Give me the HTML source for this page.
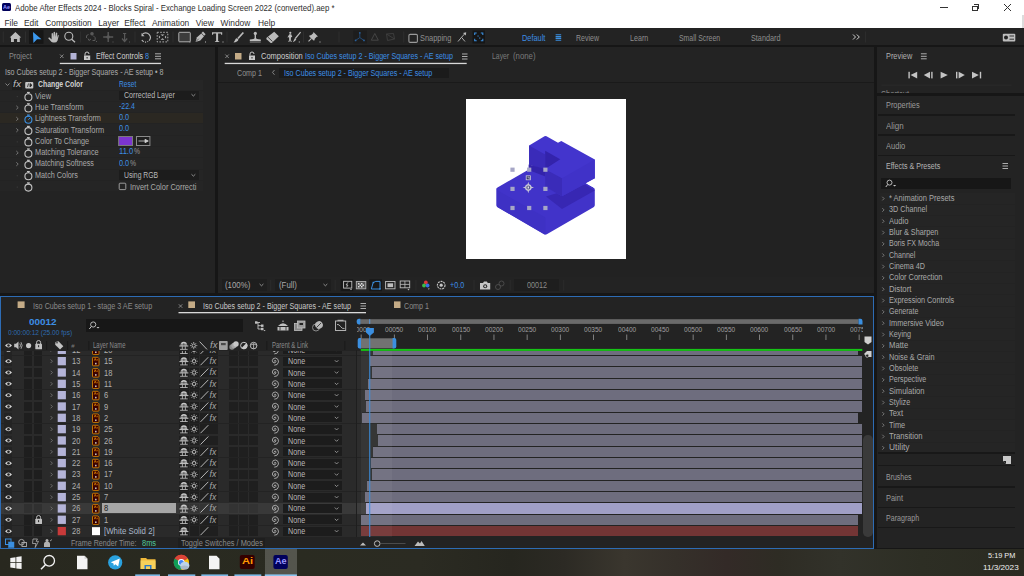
<!DOCTYPE html><html><head><meta charset="utf-8"><style>html,body{margin:0;padding:0;}body{width:1024px;height:576px;position:relative;overflow:hidden;background:#161616;font-family:"Liberation Sans",sans-serif;}div{position:absolute;}.t{position:absolute;white-space:nowrap;line-height:1;transform-origin:0 50%;}</style></head><body><div style="left:0px;top:0px;width:1024px;height:28px;background:#fff;"></div><div style="left:1022.4px;top:15px;width:1.6px;height:13px;background:#dcdcdc;"></div><div style="left:2px;top:3px;width:9px;height:8px;background:#00005b;border-radius:1.5px;"></div><span class="t" style="left:3.20px;top:4.50px;font-size:5px;color:#9999ff;font-weight:bold;transform:scaleX(1.0952);">Ae</span><span class="t" style="left:14.60px;top:3.80px;font-size:8.4px;color:#2e2e2e;transform:scaleX(0.9353);">Adobe After Effects 2024 - Blocks Spiral - Exchange Loading Screen 2022 (converted).aep *</span><span class="t" style="left:4.50px;top:18.50px;font-size:8.4px;color:#2e2e2e;">File</span><span class="t" style="left:24.00px;top:18.50px;font-size:8.4px;color:#2e2e2e;">Edit</span><span class="t" style="left:45.20px;top:18.50px;font-size:8.4px;color:#2e2e2e;">Composition</span><span class="t" style="left:98.20px;top:18.50px;font-size:8.4px;color:#2e2e2e;">Layer</span><span class="t" style="left:124.20px;top:18.50px;font-size:8.4px;color:#2e2e2e;">Effect</span><span class="t" style="left:152.00px;top:18.50px;font-size:8.4px;color:#2e2e2e;">Animation</span><span class="t" style="left:195.80px;top:18.50px;font-size:8.4px;color:#2e2e2e;">View</span><span class="t" style="left:220.50px;top:18.50px;font-size:8.4px;color:#2e2e2e;">Window</span><span class="t" style="left:258.00px;top:18.50px;font-size:8.4px;color:#2e2e2e;">Help</span><div style="left:940px;top:7px;width:8px;height:1px;background:#333;"></div><div style="left:972.3px;top:5.6px;width:5.6px;height:5.6px;background:transparent;border:1px solid #333;box-sizing:border-box;"></div><div style="left:974px;top:4.2px;width:5.3px;height:5.3px;background:transparent;border-top:1px solid #333;border-right:1px solid #333;box-sizing:border-box;"></div><svg style="position:absolute;left:1002.5px;top:3px;" width="9" height="9" viewBox="0 0 9 9"><path d="M1 1 L8 8 M8 1 L1 8" stroke="#333" stroke-width="1"/></svg><div style="left:0px;top:28px;width:1024px;height:16.5px;background:#232323;"></div><svg style="position:absolute;left:0;top:0" width="1024" height="576"><rect x="2.8" y="31.5" width="1" height="11" fill="#2e2e2e"/><rect x="25.0" y="31.5" width="1" height="11" fill="#2e2e2e"/><rect x="79.9" y="31.5" width="1" height="11" fill="#2e2e2e"/><rect x="134.5" y="31.5" width="1" height="11" fill="#2e2e2e"/><rect x="172.5" y="31.5" width="1" height="11" fill="#2e2e2e"/><rect x="226.5" y="31.5" width="1" height="11" fill="#2e2e2e"/><rect x="303.0" y="31.5" width="1" height="11" fill="#2e2e2e"/><rect x="338.5" y="31.5" width="1" height="11" fill="#2e2e2e"/><rect x="403.2" y="31.5" width="1" height="11" fill="#2e2e2e"/><rect x="864.9" y="31.5" width="1" height="11" fill="#2e2e2e"/><path d="M15.4 32 L21.2 37.6 L19.8 37.6 L19.8 42 L17.1 42 L17.1 39 L13.9 39 L13.9 42 L11 42 L11 37.6 L9.7 37.6 Z" fill="#bcbcbc"/><rect x="29" y="30.2" width="14.5" height="13.6" fill="#161616"/><path d="M33 32 L41.5 39.3 L37 39.3 L33.4 43 Z" fill="#3b98ee"/><path d="M49.5 37.5 L51.6 39.6 L51.6 33.5 Q52.3 32.6 53 33.5 L53.2 37 L53.6 32.2 Q54.4 31.3 55.1 32.2 L55.1 37 L55.9 33 Q56.7 32.2 57.3 33 L57 37.8 L57.8 35.3 Q58.6 34.8 58.8 35.6 L57.6 40.4 Q56.6 42.6 54.5 42.6 L53 42.6 Q51.5 42.4 50.2 40.4 L48.2 38.3 Q48.6 37.1 49.5 37.5 Z" fill="#bcbcbc"/><circle cx="68.8" cy="36.2" r="4" fill="none" stroke="#bcbcbc" stroke-width="1.1"/><path d="M71.7 39.2 L75 42.3" stroke="#bcbcbc" stroke-width="1.3"/><path d="M86.5 38 Q85.5 35 88.5 34.5 M93 35.5 Q96.5 37.5 95 40.5 L92.5 40.5 M88 38.5 L89 40.5 L91 39" stroke="#595959" stroke-width="1" fill="none"/><circle cx="92" cy="33.8" r="1.8" fill="#595959"/><rect x="96" y="41" width="1" height="1" fill="#595959"/><path d="M108.2 32 L108.2 42 M103.2 37 L113.2 37" stroke="#595959" stroke-width="1.4"/><circle cx="108.2" cy="37" r="1.8" fill="#595959"/><rect x="112.5" y="41.5" width="1" height="1" fill="#595959"/><path d="M124.6 33 L124.6 41 M122 38.5 L124.6 41.5 L127.2 38.5 M123 33.5 L126.2 33.5" stroke="#595959" stroke-width="1.2" fill="none"/><rect x="129" y="41.5" width="1" height="1" fill="#595959"/><path d="M142.3 34.4 A4.6 4.6 0 1 1 141.8 40" stroke="#bcbcbc" stroke-width="1.1" fill="none" stroke-dasharray="14 1.2 1 1.2 1 1.2"/><path d="M141.5 33 L141.5 36.3 L144.6 36.3 Z" fill="#bcbcbc"/><rect x="157.2" y="32.3" width="10.6" height="9.6" fill="none" stroke="#bcbcbc" stroke-width="0.9" stroke-dasharray="1.6 1.4"/><path d="M160.5 34.5 L162.5 36 L164.5 34.5 Z M160.5 39.8 L162.5 38.3 L164.5 39.8 Z M158.9 35.5 L160.3 37.1 L158.9 38.7 Z M166.1 35.5 L164.7 37.1 L166.1 38.7 Z" fill="#bcbcbc"/><rect x="178.8" y="32.3" width="11.5" height="9.5" fill="#3c3c3c" stroke="#bcbcbc" stroke-width="0.9" rx="0.8"/><rect x="189.5" y="41.5" width="1" height="1" fill="#bcbcbc"/><path d="M195.5 42 L197 37.2 L201.3 33.5 L204 36.2 L200.3 40.5 Z" fill="#bcbcbc"/><path d="M201.5 33 L203 31.6 L205.6 34.2 L204.2 35.7 Z" fill="#bcbcbc"/><path d="M195.8 41.7 L198.8 38.7" stroke="#232323" stroke-width="0.6"/><rect x="205" y="41.5" width="1" height="1" fill="#bcbcbc"/><path d="M212 32.2 L222.2 32.2 L222.2 34.8 L221.2 34.8 L220.8 33.6 L218.1 33.6 L218.1 41 L219.3 41.5 L219.3 42 L214.9 42 L214.9 41.5 L216.1 41 L216.1 33.6 L213.4 33.6 L213 34.8 L212 34.8 Z" fill="#bcbcbc"/><rect x="222.5" y="41.5" width="1" height="1" fill="#bcbcbc"/><path d="M242.7 32 L244 33 L238.6 39 L237.3 38 Z" fill="#bcbcbc"/><path d="M237 38.3 L238.5 39.6 Q237.8 42.3 233.5 42.5 Q235 40.5 235.3 39.5 Q235.8 38.4 237 38.3 Z" fill="#bcbcbc"/><circle cx="255.3" cy="33.4" r="1.6" fill="#bcbcbc"/><path d="M254.6 34.6 L256 34.6 L256 38 Q256 39.2 260.8 39.5 L260.8 41 L249.8 41 L249.8 39.5 Q254.6 39.2 254.6 38 Z" fill="#bcbcbc"/><rect x="249.8" y="41.5" width="11" height="1" fill="#888"/><path d="M274.2 31.8 L278.8 36.2 L272 42.8 Q271.2 43.4 270.4 42.8 L266.6 39.2 Q266 38.5 266.6 37.8 Z" fill="#bcbcbc"/><path d="M267.8 37 L272.5 41.5" stroke="#232323" stroke-width="0.8"/><circle cx="290.3" cy="32.8" r="1.1" fill="#bcbcbc"/><path d="M289.3 34.2 L291.2 34.2 L292.3 37 L291 37.2 L290.8 39.5 L291.8 42 L290.8 42 L290 40 L289.3 42 L288.3 42 L289.2 39.5 L289 37.2 L287.4 37.5 Z" fill="#bcbcbc"/><path d="M300.6 32.2 L295.3 38.5" stroke="#bcbcbc" stroke-width="1.2"/><path d="M295 38 L296.3 39.3 Q295.5 41.5 292.8 42.2 Q293.8 40.2 295 38 Z" fill="#bcbcbc"/><rect x="298.8" y="41.5" width="1" height="1" fill="#bcbcbc"/><path d="M313.5 32 L318 36.4 L316.7 36.7 L314.6 38.9 L314.7 40.3 L313.5 40.6 L309.3 36.4 L309.6 35.2 L311 35.3 L313.2 33.2 Z" fill="#bcbcbc"/><path d="M311.5 38.3 L308.5 41.4" stroke="#bcbcbc" stroke-width="1.1"/><rect x="319.5" y="41.5" width="1" height="1" fill="#bcbcbc"/><rect x="353.4" y="30.5" width="13.6" height="13" fill="#1d1d1d"/><path d="M359.8 32.8 L359.8 37.6 L355.6 40.4 M359.8 37.6 L364 40.4" stroke="#244f7f" stroke-width="0.9" fill="none"/><circle cx="359.8" cy="32.8" r="0.9" fill="#2a5f99"/><circle cx="355.6" cy="40.4" r="0.9" fill="#2a5f99"/><circle cx="364" cy="40.4" r="0.9" fill="#2a5f99"/><path d="M374.8 33.5 L371.3 40.2 L378.3 40.2 Z" stroke="#4a4a4a" stroke-width="0.9" fill="none"/><path d="M386.5 34 L393.5 33.5 L394.5 39 L387.5 40.5 Z M386.5 34 L394.5 39" stroke="#404040" stroke-width="0.9" fill="none"/><rect x="408.9" y="34.4" width="8.5" height="8" rx="1.2" fill="none" stroke="#9a9a9a" stroke-width="1.1"/><path d="M458 41.5 L461.5 37.3 L465 41.5 M461.5 37.3 L465 33.5" stroke="#bcbcbc" stroke-width="0.9" fill="none"/><path d="M463 33 L466.2 32.3 L465.8 35.6 Z" fill="#bcbcbc"/><rect x="472.5" y="30.5" width="12.5" height="13" fill="#161616"/><path d="M474.7 35 L474.7 33 L476.7 33 M480.8 33 L482.8 33 L482.8 35 M482.8 38.8 L482.8 40.8 L480.8 40.8 M476.7 40.8 L474.7 40.8 L474.7 38.8" stroke="#3b8fe0" stroke-width="1.1" fill="none"/><rect x="477.5" y="35.5" width="1.1" height="1.1" fill="#3b8fe0"/><rect x="479.2" y="37.5" width="1.1" height="1.1" fill="#3b8fe0"/><path d="M555.6 34.8 H561.2 M555.6 36.6 H561.2 M555.6 38.4 H561.2 M555.6 40.2 H561.2" stroke="#3b8fe0" stroke-width="1.1"/><path d="M853 34.5 L855.5 37 L853 39.5 M856.8 34.5 L859.3 37 L856.8 39.5" stroke="#cfcfcf" stroke-width="1" fill="none"/><rect x="1002.8" y="33.8" width="12.5" height="7.7" rx="1" fill="#bdbdbd"/><circle cx="1006" cy="37.6" r="2" fill="#232323"/><path d="M1009.5 36 H1014 M1009.5 39.2 H1014" stroke="#232323" stroke-width="0.9"/></svg><span class="t" style="left:420.00px;top:33.70px;font-size:8.4px;color:#8f8f8f;transform:scaleX(0.8846);">Snapping</span><span class="t" style="left:521.90px;top:33.70px;font-size:8.4px;color:#3d8ee5;transform:scaleX(0.8793);">Default</span><span class="t" style="left:576.00px;top:33.70px;font-size:8.4px;color:#8f8f8f;transform:scaleX(0.8351);">Review</span><span class="t" style="left:629.70px;top:33.70px;font-size:8.4px;color:#8f8f8f;transform:scaleX(0.8519);">Learn</span><span class="t" style="left:678.80px;top:33.70px;font-size:8.4px;color:#8f8f8f;transform:scaleX(0.8248);">Small Screen</span><span class="t" style="left:751.00px;top:33.70px;font-size:8.4px;color:#8f8f8f;transform:scaleX(0.8654);">Standard</span><div style="left:0px;top:46.5px;width:214.5px;height:246px;background:#232323;"></div><div style="left:217.5px;top:46.5px;width:656.3px;height:246px;background:#232323;"></div><div style="left:877px;top:46.5px;width:147px;height:46px;background:#232323;"></div><div style="left:877px;top:96px;width:147px;height:452px;background:#232323;"></div><div style="left:0px;top:296px;width:873.5px;height:253px;background:#232323;box-shadow:inset 0 0 0 1px #2d6cb5;"></div><div style="left:0px;top:549px;width:1024px;height:27px;background:linear-gradient(90deg,#28281f 0%,#2a2b21 29%,#2b2b22 41%,#26261f 50%,#2c2a24 55%,#3a362e 61%,#35302a 66%,#332a27 71%,#2e2c24 76%,#32322a 82%,#2d2e24 90%,#2a2a21 100%);"></div><span class="t" style="left:9.00px;top:51.80px;font-size:8.4px;color:#8a8a8a;transform:scaleX(0.8721);">Project</span><span class="t" style="left:95.70px;top:51.80px;font-size:8.4px;color:#cfcfcf;transform:scaleX(0.8610);">Effect Controls</span><span class="t" style="left:145.00px;top:51.80px;font-size:8.4px;color:#3d8ee5;transform:scaleX(0.8563);">8</span><span class="t" style="left:4.50px;top:68.30px;font-size:8.4px;color:#a9a9a9;transform:scaleX(0.8528);">Iso Cubes setup 2 - Bigger Squares - AE setup • 8</span><div style="left:0px;top:79.8px;width:203px;height:10.3px;background:#262626;"></div><div style="left:0px;top:90.5px;width:203px;height:10.3px;background:#252525;"></div><div style="left:0px;top:101.8px;width:203px;height:10.3px;background:#252525;"></div><div style="left:0px;top:113.1px;width:203px;height:10.3px;background:#2b2822;"></div><div style="left:0px;top:124.4px;width:203px;height:10.3px;background:#252525;"></div><div style="left:0px;top:135.7px;width:203px;height:10.3px;background:#252525;"></div><div style="left:0px;top:147.0px;width:203px;height:10.3px;background:#252525;"></div><div style="left:0px;top:158.3px;width:203px;height:10.3px;background:#252525;"></div><div style="left:0px;top:169.60000000000002px;width:203px;height:10.3px;background:#252525;"></div><div style="left:0px;top:180.9px;width:203px;height:10.3px;background:#252525;"></div><div style="left:12.4px;top:80.2px;width:9.6px;height:9.6px;background:#1d1d1d;"></div><span class="t" style="left:13.40px;top:79.95px;font-size:9.2px;color:#bdbdbd;transform:scaleX(1.1319);font-style:italic;font-family:"Liberation Serif",serif;">fx</span><span class="t" style="left:37.60px;top:80.40px;font-size:8.4px;color:#d2d2d2;font-weight:bold;transform:scaleX(0.8190);">Change Color</span><span class="t" style="left:118.70px;top:80.10px;font-size:8.4px;color:#3d8ee5;transform:scaleX(0.7884);">Reset</span><span class="t" style="left:34.90px;top:91.60px;font-size:8.4px;color:#a9a9a9;transform:scaleX(0.8917);">View</span><span class="t" style="left:34.90px;top:102.90px;font-size:8.4px;color:#a9a9a9;transform:scaleX(0.8803);">Hue Transform</span><span class="t" style="left:34.90px;top:114.20px;font-size:8.4px;color:#a9a9a9;transform:scaleX(0.8687);">Lightness Transform</span><span class="t" style="left:34.90px;top:125.50px;font-size:8.4px;color:#a9a9a9;transform:scaleX(0.8836);">Saturation Transform</span><span class="t" style="left:34.90px;top:136.80px;font-size:8.4px;color:#a9a9a9;transform:scaleX(0.8635);">Color To Change</span><span class="t" style="left:34.90px;top:148.10px;font-size:8.4px;color:#a9a9a9;transform:scaleX(0.8792);">Matching Tolerance</span><span class="t" style="left:34.90px;top:159.40px;font-size:8.4px;color:#a9a9a9;transform:scaleX(0.8553);">Matching Softness</span><span class="t" style="left:34.90px;top:170.70px;font-size:8.4px;color:#a9a9a9;transform:scaleX(0.8691);">Match Colors</span><div style="left:118.7px;top:90.7px;width:80.3px;height:9.3px;background:#1c1c1c;"></div><span class="t" style="left:123.80px;top:90.90px;font-size:8.4px;color:#b9b9b9;transform:scaleX(0.8452);">Corrected Layer</span><span class="t" style="left:119.20px;top:101.90px;font-size:8.4px;color:#3d8ee5;transform:scaleX(0.8305);">-22.4</span><span class="t" style="left:118.70px;top:113.20px;font-size:8.4px;color:#3d8ee5;transform:scaleX(0.8736);">0.0</span><span class="t" style="left:118.70px;top:124.20px;font-size:8.4px;color:#3d8ee5;transform:scaleX(0.8736);">0.0</span><span class="t" style="left:119.20px;top:147.40px;font-size:8.4px;color:#3d8ee5;transform:scaleX(0.9031);">11.0</span><span class="t" style="left:133.60px;top:147.40px;font-size:8.4px;color:#9a9a9a;transform:scaleX(0.8033);">%</span><span class="t" style="left:118.70px;top:159.00px;font-size:8.4px;color:#3d8ee5;transform:scaleX(0.8736);">0.0</span><span class="t" style="left:129.90px;top:159.00px;font-size:8.4px;color:#9a9a9a;transform:scaleX(0.8167);">%</span><div style="left:118.7px;top:170.3px;width:80.3px;height:10px;background:#1c1c1c;"></div><span class="t" style="left:123.80px;top:170.80px;font-size:8.4px;color:#b9b9b9;transform:scaleX(0.8141);">Using RGB</span><span class="t" style="left:129.70px;top:182.70px;font-size:8.4px;color:#a9a9a9;transform:scaleX(0.8862);">Invert Color Correcti</span><svg style="position:absolute;left:0;top:0" width="1024" height="576"><path d="M60 54.5 L63.5 58 M63.5 54.5 L60 58" stroke="#9a9a9a" stroke-width="0.8"/><rect x="70.5" y="53" width="6" height="6.5" fill="#b3b3d6"/><path d="M85 55.5 L85 54 Q85 52 87 52 Q89 52 89 54" stroke="#c8c8c8" stroke-width="1" fill="none"/><rect x="84" y="55.5" width="6.2" height="4.5" fill="#c8c8c8"/><rect x="86.6" y="57" width="1" height="1.5" fill="#232323"/><path d="M155 53.8 H161 M155 56.3 H161 M155 58.8 H161" stroke="#bdbdbd" stroke-width="0.9"/><rect x="59.8" y="62.8" width="101.2" height="1.3" fill="#d9d9d9"/><path d="M5.5 83.5 L7.5 85.5 L9.5 83.5" stroke="#9a9a9a" stroke-width="0.8" fill="none"/><rect x="25.2" y="82" width="8.1" height="6.4" rx="1" fill="#c6c6c6"/><path d="M27.5 87 L28.5 83.5 M30 83.5 L32 85.2 L30 87 Z" stroke="#262626" stroke-width="0.8" fill="#262626"/><circle cx="28.4" cy="97.2" r="3.5" fill="none" stroke="#c2c2c2" stroke-width="1.1"/><rect x="27" y="91.89999999999999" width="2.8" height="1.2" fill="#c2c2c2"/><rect x="27.9" y="92.89999999999999" width="1" height="1" fill="#c2c2c2"/><rect x="16.8" y="96.3" width="0.8" height="0.8" fill="#555"/><circle cx="28.4" cy="108.5" r="3.5" fill="none" stroke="#c2c2c2" stroke-width="1.1"/><rect x="27" y="103.19999999999999" width="2.8" height="1.2" fill="#c2c2c2"/><rect x="27.9" y="104.19999999999999" width="1" height="1" fill="#c2c2c2"/><path d="M16.3 105.8 L18.2 107.6 L16.3 109.39999999999999" stroke="#8a8a8a" stroke-width="0.8" fill="none"/><circle cx="28.4" cy="119.80000000000001" r="3.5" fill="none" stroke="#3b8fe0" stroke-width="1.1"/><rect x="27" y="114.5" width="2.8" height="1.2" fill="#3b8fe0"/><rect x="27.9" y="115.5" width="1" height="1" fill="#3b8fe0"/><path d="M28.4 119.7 L30.2 117.9" stroke="#3b8fe0" stroke-width="1"/><path d="M16.3 117.10000000000001 L18.2 118.9 L16.3 120.7" stroke="#8a8a8a" stroke-width="0.8" fill="none"/><circle cx="28.4" cy="131.1" r="3.5" fill="none" stroke="#c2c2c2" stroke-width="1.1"/><rect x="27" y="125.79999999999998" width="2.8" height="1.2" fill="#c2c2c2"/><rect x="27.9" y="126.79999999999998" width="1" height="1" fill="#c2c2c2"/><path d="M16.3 128.39999999999998 L18.2 130.2 L16.3 132.0" stroke="#8a8a8a" stroke-width="0.8" fill="none"/><circle cx="28.4" cy="142.4" r="3.5" fill="none" stroke="#c2c2c2" stroke-width="1.1"/><rect x="27" y="137.1" width="2.8" height="1.2" fill="#c2c2c2"/><rect x="27.9" y="138.1" width="1" height="1" fill="#c2c2c2"/><rect x="16.8" y="141.5" width="0.8" height="0.8" fill="#555"/><circle cx="28.4" cy="153.70000000000002" r="3.5" fill="none" stroke="#c2c2c2" stroke-width="1.1"/><rect x="27" y="148.4" width="2.8" height="1.2" fill="#c2c2c2"/><rect x="27.9" y="149.4" width="1" height="1" fill="#c2c2c2"/><path d="M16.3 151.0 L18.2 152.8 L16.3 154.60000000000002" stroke="#8a8a8a" stroke-width="0.8" fill="none"/><circle cx="28.4" cy="165.00000000000003" r="3.5" fill="none" stroke="#c2c2c2" stroke-width="1.1"/><rect x="27" y="159.70000000000002" width="2.8" height="1.2" fill="#c2c2c2"/><rect x="27.9" y="160.70000000000002" width="1" height="1" fill="#c2c2c2"/><path d="M16.3 162.3 L18.2 164.10000000000002 L16.3 165.90000000000003" stroke="#8a8a8a" stroke-width="0.8" fill="none"/><circle cx="28.4" cy="176.3" r="3.5" fill="none" stroke="#c2c2c2" stroke-width="1.1"/><rect x="27" y="171.0" width="2.8" height="1.2" fill="#c2c2c2"/><rect x="27.9" y="172.0" width="1" height="1" fill="#c2c2c2"/><rect x="16.8" y="175.4" width="0.8" height="0.8" fill="#555"/><circle cx="28.4" cy="187.6" r="3.5" fill="none" stroke="#c2c2c2" stroke-width="1.1"/><rect x="27" y="182.29999999999998" width="2.8" height="1.2" fill="#c2c2c2"/><rect x="27.9" y="183.29999999999998" width="1" height="1" fill="#c2c2c2"/><rect x="16.8" y="186.7" width="0.8" height="0.8" fill="#555"/><path d="M191.5 94.2 L193.4 96 L195.3 94.2" stroke="#aaa" stroke-width="0.8" fill="none"/><rect x="118.6" y="136.5" width="13.9" height="9" fill="#7b35d0" stroke="#7a7a7a" stroke-width="1"/><rect x="136.5" y="136.5" width="13.4" height="9" fill="#1f1f1f" stroke="#8a8a8a" stroke-width="1"/><path d="M138.5 141 H146 M145 139.3 L148.3 141 L145 142.7 Z" stroke="#cfcfcf" stroke-width="0.8" fill="#cfcfcf"/><path d="M191.5 174.3 L193.4 176.1 L195.3 174.3" stroke="#aaa" stroke-width="0.8" fill="none"/><rect x="119.2" y="183.2" width="6.6" height="6.4" rx="0.8" fill="none" stroke="#9a9a9a" stroke-width="1"/></svg><span class="t" style="left:260.80px;top:51.80px;font-size:8.4px;color:#cfcfcf;transform:scaleX(0.8975);">Composition</span><span class="t" style="left:304.70px;top:51.80px;font-size:8.4px;color:#3d8ee5;transform:scaleX(0.8515);">Iso Cubes setup 2 - Bigger Squares - AE setup</span><span class="t" style="left:491.80px;top:51.80px;font-size:8.4px;color:#7a7a7a;transform:scaleX(0.8186);">Layer</span><span class="t" style="left:513.40px;top:51.80px;font-size:8.4px;color:#7a7a7a;transform:scaleX(0.9309);">(none)</span><div style="left:217.5px;top:81.5px;width:656.3px;height:1px;background:#1a1a1a;"></div><span class="t" style="left:237.00px;top:68.50px;font-size:8.4px;color:#8f8f8f;transform:scaleX(0.8500);">Comp 1</span><div style="left:278.9px;top:67.5px;width:170.1px;height:10px;background:#1b1b1b;"></div><span class="t" style="left:284.40px;top:68.50px;font-size:8.4px;color:#3d8ee5;transform:scaleX(0.8533);">Iso Cubes setup 2 - Bigger Squares - AE setup</span><div style="left:217.5px;top:82.5px;width:656.3px;height:195px;background:#222222;"></div><div style="left:466px;top:99px;width:160px;height:160px;background:#ffffff;"></div><div style="left:217.5px;top:277.4px;width:656.3px;height:15.1px;background:#232323;"></div><div style="left:221.9px;top:279.4px;width:44.9px;height:11.7px;background:#1e1e1e;"></div><span class="t" style="left:224.80px;top:280.50px;font-size:8.4px;color:#a9a9a9;transform:scaleX(0.9381);">(100%)</span><div style="left:274.6px;top:279.4px;width:56.7px;height:11.7px;background:#1e1e1e;"></div><span class="t" style="left:279.10px;top:280.50px;font-size:8.4px;color:#a9a9a9;transform:scaleX(0.9358);">(Full)</span><span class="t" style="left:449.50px;top:280.50px;font-size:8.4px;color:#3d8ee5;transform:scaleX(0.8563);">+0.0</span><div style="left:514px;top:279.4px;width:45.4px;height:11.7px;background:#1e1e1e;"></div><span class="t" style="left:526.60px;top:280.50px;font-size:8.4px;color:#8a8a8a;transform:scaleX(0.8606);">00012</span><svg style="position:absolute;left:0;top:0" width="1024" height="576"><path d="M225.3 54.5 L228.8 58 M228.8 54.5 L225.3 58" stroke="#9a9a9a" stroke-width="0.8"/><rect x="235" y="53" width="6.5" height="6.5" fill="#c4ab86"/><path d="M250 55.5 L250 54 Q250 52 252 52 Q254 52 254 54" stroke="#c8c8c8" stroke-width="1" fill="none"/><rect x="249" y="55.5" width="6" height="4.5" fill="#c8c8c8"/><rect x="251.5" y="57" width="1" height="1.5" fill="#232323"/><path d="M462 54 H467.5 M462 56.5 H467.5 M462 59 H467.5" stroke="#bdbdbd" stroke-width="0.9"/><rect x="224.7" y="62.8" width="242" height="1.3" fill="#d9d9d9"/><path d="M274.5 70 L272.5 72.4 L274.5 74.8" stroke="#9a9a9a" stroke-width="0.8" fill="none"/><path d="M496.3 189.5 Q496 188.3 497.5 187.5 L544 160.8 Q545.4 160 546.8 160.8 L593.5 187.5 Q594.8 188.3 594.8 189.5 L594.8 205.2 Q594.8 206.4 593.5 207.2 L546.8 234.2 Q545.4 235 544 234.2 L497.5 207.2 Q496.3 206.4 496.3 205.2 Z" fill="#4133c9"/><path d="M497 190 L545.4 217.5 L545.4 234.8 L497.5 207 Z" fill="#3e31c4"/><path d="M546 196.5 L585 184.5 L594.8 190.5 L562 209 Z" fill="#3727b3"/><path d="M529.1 145.4 L544.5 136.3 Q545.5 135.8 546.5 136.3 L558 142.7 L561.3 140.9 L594.8 159.4 L594.8 178.6 L562 196.3 L545.2 186.8 L545.2 169.2 L529.1 164.8 Z" fill="#4335cd"/><path d="M529.1 145.4 L545.2 154.5 L545.2 169.2 L529.1 164.8 Z" fill="#3a2bb9"/><path d="M528.6 164.6 L545.4 169 L545.4 176.5 L528.6 170 Z" fill="#3323ab"/><path d="M545.2 150.8 L560.2 159.3 L545.2 169 Z" fill="#3323ab"/><path d="M545.2 169.2 L562 178.3 L562 196.3 L545.2 186.8 Z" fill="#3a2bb9"/><path d="M562 178.3 L594.8 159.4 L594.8 178.6 L562 196.3 Z" fill="#4032c8"/><path d="M586 183.3 L594.8 178.6 L594.8 188.3 Z" fill="#fff"/><rect x="510.4" y="167.6" width="4.2" height="4.2" fill="#a6a6c6"/><rect x="510.4" y="186.8" width="4.2" height="4.2" fill="#a6a6c6"/><rect x="510.4" y="205.9" width="4.2" height="4.2" fill="#a6a6c6"/><rect x="527.1" y="167.6" width="4.2" height="4.2" fill="#a6a6c6"/><rect x="527.1" y="205.9" width="4.2" height="4.2" fill="#a6a6c6"/><rect x="543.3" y="167.6" width="4.2" height="4.2" fill="#a6a6c6"/><rect x="543.3" y="186.8" width="4.2" height="4.2" fill="#a6a6c6"/><rect x="543.3" y="205.9" width="4.2" height="4.2" fill="#a6a6c6"/><path d="M528.3 181.8 L529.3 185 L527.3 185 Z M528.3 193.2 L529.3 190 L527.3 190 Z M522.6 187.5 L525.8 186.5 L525.8 188.5 Z M534 187.5 L530.8 186.5 L530.8 188.5 Z" fill="#c4c4d4"/><circle cx="528.3" cy="187.5" r="2.6" fill="#5a5a8a" stroke="#c8c8d8" stroke-width="1.2"/><rect x="527.6" y="186.5" width="1.4" height="2" fill="#e0e0e8"/><rect x="526.2" y="175.8" width="4.2" height="4" fill="#3a3a6a" stroke="#c8c8d8" stroke-width="0.8"/><path d="M527.5 177.2 H529.2 V179" stroke="#e0e0e8" stroke-width="0.6" fill="none"/><path d="M259.6 284 L261.5 285.8 L263.4 284" stroke="#aaa" stroke-width="0.8" fill="none"/><path d="M323.5 284 L325.4 285.8 L327.3 284" stroke="#aaa" stroke-width="0.8" fill="none"/><rect x="270.2" y="280" width="1" height="10.5" fill="#2c2c2c"/><rect x="334.7" y="280" width="1" height="10.5" fill="#2c2c2c"/><rect x="415.4" y="280" width="1" height="10.5" fill="#2c2c2c"/><rect x="473.5" y="280" width="1" height="10.5" fill="#2c2c2c"/><rect x="509.7" y="280" width="1" height="10.5" fill="#2c2c2c"/><rect x="563.2" y="280" width="1" height="10.5" fill="#2c2c2c"/><rect x="340.6" y="279.4" width="12.5" height="11.7" fill="#171717"/><rect x="343.6" y="281.3" width="8.2" height="6.8" fill="none" stroke="#c4c4c4" stroke-width="0.9"/><path d="M348 282.3 L346 285 L348 285 L346.5 287.3" stroke="#c4c4c4" stroke-width="0.8" fill="none"/><path d="M350 289 L352 289 L351 290.2 Z" fill="#c4c4c4"/><rect x="356.3" y="281.5" width="9.5" height="7.3" fill="#555" stroke="#b0b0b0" stroke-width="0.9"/><rect x="358" y="283" width="1.5" height="1.5" fill="#ddd"/><rect x="361" y="283" width="1.5" height="1.5" fill="#ddd"/><rect x="359.5" y="284.5" width="1.5" height="1.5" fill="#ddd"/><rect x="362.5" y="284.5" width="1.5" height="1.5" fill="#ddd"/><rect x="358" y="286" width="1.5" height="1.5" fill="#ddd"/><rect x="361" y="286" width="1.5" height="1.5" fill="#ddd"/><rect x="369.3" y="279.4" width="12.7" height="11.7" fill="#171717"/><path d="M371.3 289 L373.2 282.6 L375.8 281.4 L380 281.4 L380 289 Z" fill="none" stroke="#3b8fe0" stroke-width="1" stroke-linejoin="miter"/><rect x="372.6" y="281.8" width="1.4" height="1.4" fill="#3b8fe0"/><rect x="379.3" y="288.3" width="1.4" height="1.4" fill="#3b8fe0"/><rect x="385.6" y="281.5" width="9.4" height="7.3" fill="none" stroke="#bdbdbd" stroke-width="0.9"/><rect x="387.5" y="283.3" width="5.6" height="3.8" fill="#bdbdbd"/><rect x="400.2" y="281" width="9.5" height="6.8" fill="none" stroke="#bdbdbd" stroke-width="0.9"/><path d="M404.9 281 V287.8 M400.2 284.4 H409.7" stroke="#bdbdbd" stroke-width="0.8"/><path d="M407.5 289 L409.5 289 L408.5 290.5 Z" fill="#bdbdbd"/><circle cx="425.8" cy="282.5" r="1.9" fill="#e0383a"/><circle cx="424" cy="285.5" r="1.9" fill="#3cbc48"/><circle cx="427.6" cy="285.5" r="1.9" fill="#3a6fe8"/><path d="M427.8 288.5 L429.8 288.5 L428.8 289.8 Z" fill="#bbb"/><circle cx="441.2" cy="285.2" r="3.8" fill="none" stroke="#c4c4c4" stroke-width="1.1" stroke-dasharray="2 0.8"/><circle cx="441.2" cy="285.2" r="1.6" fill="#c4c4c4"/><path d="M480 283 L483 283 L484 281.5 L486.8 281.5 L487.8 283 L490.2 283 L490.2 289.5 L480 289.5 Z" fill="#c6c6c6"/><circle cx="485.2" cy="286.3" r="2" fill="#232323"/><circle cx="485.2" cy="286.3" r="1.1" fill="#c6c6c6"/><circle cx="498" cy="287" r="2.5" fill="none" stroke="#4a4a4a" stroke-width="1"/><circle cx="501.5" cy="283.5" r="2.5" fill="none" stroke="#4a4a4a" stroke-width="1"/></svg><span class="t" style="left:32.50px;top:302.10px;font-size:8.4px;color:#8a8a8a;transform:scaleX(0.8617);">Iso Cubes setup 1 - stage 3 AE setup</span><span class="t" style="left:203.30px;top:302.10px;font-size:8.4px;color:#c8c8c8;transform:scaleX(0.8527);">Iso Cubes setup 2 - Bigger Squares - AE setup</span><span class="t" style="left:404.00px;top:302.10px;font-size:8.4px;color:#8a8a8a;transform:scaleX(0.8500);">Comp 1</span><span class="t" style="left:28.60px;top:316.54px;font-size:9.4px;color:#3d8ee5;font-weight:bold;transform:scaleX(1.0560);">00012</span><span class="t" style="left:7.90px;top:328.88px;font-size:7px;color:#2e6bb0;transform:scaleX(0.9360);">0:00:00:12 (25.00 fps)</span><div style="left:86px;top:319.4px;width:157.4px;height:12.2px;background:#171717;"></div><span class="t" style="left:71.20px;top:343.24px;font-size:6px;color:#7a7a7a;">#</span><span class="t" style="left:93.10px;top:341.10px;font-size:8.4px;color:#8a8a8a;transform:scaleX(0.7126);">Layer Name</span><span class="t" style="left:209.80px;top:340.90px;font-size:8.4px;color:#a8a8a8;transform:scaleX(1.1326);font-style:italic;font-family:"Liberation Serif",serif;">fx</span><span class="t" style="left:271.70px;top:341.10px;font-size:8.4px;color:#8a8a8a;transform:scaleX(0.7159);">Parent &amp; Link</span><svg style="position:absolute;left:0;top:0" width="1024" height="576"><rect x="17.6" y="301.4" width="7" height="6.6" fill="#c4ab86"/><path d="M178.8 304.3 L182.3 307.8 M182.3 304.3 L178.8 307.8" stroke="#9a9a9a" stroke-width="0.8"/><rect x="188.3" y="301.4" width="6.7" height="6.6" fill="#c4ab86"/><path d="M360.5 303.5 H366 M360.5 306 H366 M360.5 308.5 H366" stroke="#bdbdbd" stroke-width="0.9"/><rect x="178.5" y="312" width="187.5" height="1.3" fill="#d9d9d9"/><rect x="394" y="301.4" width="6.5" height="6.6" fill="#c4ab86"/><circle cx="93.2" cy="324.5" r="2.6" fill="none" stroke="#c8c8c8" stroke-width="0.9"/><path d="M91.3 326.5 L89.3 329" stroke="#c8c8c8" stroke-width="1"/><path d="M96.5 327 L99.5 327 L98 328.6 Z" fill="#c8c8c8"/><path d="M255.5 322.5 H260 M258 322.5 V329 H262 M258 325.7 H262" stroke="#c0c0c0" stroke-width="0.9" fill="none"/><rect x="255" y="321.3" width="2.5" height="2.4" fill="#c0c0c0"/><rect x="261" y="324.5" width="2.5" height="2.4" fill="#c0c0c0"/><rect x="261" y="327.8" width="2.5" height="2.4" fill="#c0c0c0"/><path d="M263.5 330 L265.6 330 L264.5 331.3 Z" fill="#c0c0c0"/><path d="M278 326 Q283 320.5 288 326 Z" fill="#c0c0c0"/><rect x="282.5" y="320.5" width="1" height="1.5" fill="#c0c0c0"/><rect x="277.5" y="327" width="11" height="3.5" fill="#c0c0c0"/><path d="M280 326 V330.5 M286 326 V330.5" stroke="#232323" stroke-width="0.8"/><rect x="294.5" y="323.5" width="7.5" height="7" fill="#888" stroke="#c0c0c0" stroke-width="0.8"/><rect x="297.5" y="321" width="7.5" height="7" fill="#9a9a9a" stroke="#c0c0c0" stroke-width="0.8"/><rect x="299.5" y="323" width="3.5" height="2" fill="#232323"/><ellipse cx="316" cy="327.5" rx="3.5" ry="3.5" fill="none" stroke="#8a8a8a" stroke-width="1"/><ellipse cx="319" cy="325" rx="3.8" ry="3.8" fill="#b8b8b8" transform="rotate(-30 319 325)"/><path d="M316.5 327.5 L321 323" stroke="#232323" stroke-width="0.8"/><rect x="335.5" y="321" width="10.2" height="9.5" fill="none" stroke="#c0c0c0" stroke-width="0.9"/><path d="M337 324.5 Q339 324 340.5 326.5 Q342 329 344.5 328.5" stroke="#c0c0c0" stroke-width="0.9" fill="none"/><rect x="337.5" y="319.8" width="6" height="1" fill="#c0c0c0"/><path d="M5 345.5 Q8.5 341.5 12 345.5 Q8.5 349.5 5 345.5 Z" fill="#d0d0d0"/><circle cx="8.5" cy="345.5" r="1.3" fill="#232323"/><path d="M14.2 343.8 H16 L18.5 341.5 V349.5 L16 347.2 H14.2 Z" fill="#c0c0c0"/><path d="M19.8 343.5 Q21.2 345.5 19.8 347.5 M21 342.2 Q23.2 345.5 21 348.8" stroke="#c0c0c0" stroke-width="0.8" fill="none"/><circle cx="28.6" cy="345.6" r="2.6" fill="#c8c8c8"/><path d="M36.6 344 V342.5 Q36.6 340.5 38.6 340.5 Q40.6 340.5 40.6 342.5 V344" stroke="#c0c0c0" stroke-width="1" fill="none"/><rect x="35.3" y="343.8" width="6.7" height="5.5" rx="0.6" fill="#c0c0c0"/><rect x="38.1" y="345.2" width="1" height="2" fill="#232323"/><path d="M55.5 342 L58.5 341.3 L63.3 346.3 L60 349.5 L55.2 344.7 Z" fill="#c4c4c4"/><circle cx="57" cy="342.8" r="0.8" fill="#232323"/><rect x="46.1" y="341" width="1" height="9" fill="#1a1a1a"/><rect x="67.2" y="341" width="1" height="9" fill="#1a1a1a"/><rect x="88.3" y="341" width="1" height="9" fill="#1a1a1a"/><rect x="266.3" y="341" width="1" height="9" fill="#1a1a1a"/><rect x="344.4" y="341" width="1" height="9" fill="#1a1a1a"/><path d="M180.4 345.6 Q180.4 341.7 183.8 341.7 Q187.20000000000002 341.7 187.20000000000002 345.6 Z" fill="#c8c8c8"/><rect x="179.3" y="345.5" width="9" height="1" fill="#c8c8c8"/><path d="M182.3 346.3 V349.2 M185.3 346.3 V349.2" stroke="#c8c8c8" stroke-width="0.8"/><rect x="180.0" y="348.90000000000003" width="7.6" height="0.8" fill="#c8c8c8"/><path d="M183.8 343.1 V345.3" stroke="#232323" stroke-width="0.6"/><path d="M180.4 344.3 H187.20000000000002" stroke="#232323" stroke-width="0.5"/><circle cx="193.7" cy="345.6" r="1.7" fill="none" stroke="#c8c8c8" stroke-width="0.9"/><path d="M196.20 345.60 L197.30 345.60" stroke="#c8c8c8" stroke-width="0.8"/><path d="M195.47 347.37 L196.25 348.15" stroke="#c8c8c8" stroke-width="0.8"/><path d="M193.70 348.10 L193.70 349.20" stroke="#c8c8c8" stroke-width="0.8"/><path d="M191.93 347.37 L191.15 348.15" stroke="#c8c8c8" stroke-width="0.8"/><path d="M191.20 345.60 L190.10 345.60" stroke="#c8c8c8" stroke-width="0.8"/><path d="M191.93 343.83 L191.15 343.05" stroke="#c8c8c8" stroke-width="0.8"/><path d="M193.70 343.10 L193.70 342.00" stroke="#c8c8c8" stroke-width="0.8"/><path d="M195.47 343.83 L196.25 343.05" stroke="#c8c8c8" stroke-width="0.8"/><path d="M199.6 341.6 L207 349.4" stroke="#c8c8c8" stroke-width="0.9"/><rect x="219" y="341" width="8.7" height="9" rx="0.8" fill="#a0a0a0"/><rect x="221" y="343" width="4.7" height="2.2" fill="#4a4a4a"/><circle cx="232" cy="347" r="2.7" fill="#8a8a8a"/><circle cx="234" cy="345.5" r="2.7" fill="#a8a8a8"/><circle cx="236" cy="344" r="2.7" fill="#c8c8c8"/><circle cx="243.9" cy="345.6" r="3.3" fill="none" stroke="#c8c8c8" stroke-width="1"/><path d="M243.9 345.6 m-3.3 0 a3.3 3.3 0 0 0 6.6 0 Z" fill="#c8c8c8" transform="rotate(-45 243.9 345.6)"/><circle cx="253.6" cy="345.6" r="3.3" fill="none" stroke="#c8c8c8" stroke-width="0.9"/><path d="M250.5 345.2 Q253.6 342.5 256.7 345.2 M253.6 343.5 V348.8" stroke="#c8c8c8" stroke-width="0.8" fill="none"/></svg><div style="left:356px;top:350.4px;width:1px;height:187px;background:#1e1e1e;"></div><div style="left:0;top:351.2px;width:873px;height:185.8px;overflow:hidden;"><div style="left:0.80px;top:-6.72px;width:355.20px;height:10.80px;background:#2a2a2a;"></div><div style="left:356.00px;top:-7.02px;width:1.00px;height:11.40px;background:#1e1e1e;"></div><div style="left:4.10px;top:-6.22px;width:8.20px;height:9.80px;background:#232323;"></div><div style="left:24.00px;top:-6.22px;width:8.20px;height:9.80px;background:#1e1e1e;"></div><div style="left:34.00px;top:-6.22px;width:8.20px;height:9.80px;background:#1e1e1e;"></div><div style="left:178.80px;top:-6.22px;width:9.80px;height:9.80px;background:#1f1f1f;"></div><div style="left:189.80px;top:-6.22px;width:9.00px;height:9.80px;background:#1f1f1f;"></div><div style="left:199.60px;top:-6.22px;width:9.20px;height:9.80px;background:#1f1f1f;"></div><div style="left:209.30px;top:-6.22px;width:8.60px;height:9.80px;background:#1f1f1f;"></div><div style="left:229.00px;top:-6.22px;width:8.80px;height:9.80px;background:#1f1f1f;"></div><div style="left:239.00px;top:-6.22px;width:8.80px;height:9.80px;background:#1f1f1f;"></div><div style="left:248.80px;top:-6.22px;width:8.80px;height:9.80px;background:#1f1f1f;"></div><div style="left:283.20px;top:-5.92px;width:58.40px;height:9.20px;background:#1c1c1c;"></div><div style="left:357.00px;top:-6.72px;width:16.30px;height:10.80px;background:#2d2d2d;"></div><div style="left:373.30px;top:-6.42px;width:485.10px;height:10.20px;background:#6e6d7e;"></div><div style="left:0.80px;top:4.61px;width:355.20px;height:10.80px;background:#2a2a2a;"></div><div style="left:356.00px;top:4.31px;width:1.00px;height:11.40px;background:#1e1e1e;"></div><div style="left:4.10px;top:5.11px;width:8.20px;height:9.80px;background:#232323;"></div><div style="left:24.00px;top:5.11px;width:8.20px;height:9.80px;background:#1e1e1e;"></div><div style="left:34.00px;top:5.11px;width:8.20px;height:9.80px;background:#1e1e1e;"></div><div style="left:178.80px;top:5.11px;width:9.80px;height:9.80px;background:#1f1f1f;"></div><div style="left:189.80px;top:5.11px;width:9.00px;height:9.80px;background:#1f1f1f;"></div><div style="left:199.60px;top:5.11px;width:9.20px;height:9.80px;background:#1f1f1f;"></div><div style="left:209.30px;top:5.11px;width:8.60px;height:9.80px;background:#1f1f1f;"></div><div style="left:229.00px;top:5.11px;width:8.80px;height:9.80px;background:#1f1f1f;"></div><div style="left:239.00px;top:5.11px;width:8.80px;height:9.80px;background:#1f1f1f;"></div><div style="left:248.80px;top:5.11px;width:8.80px;height:9.80px;background:#1f1f1f;"></div><div style="left:283.20px;top:5.41px;width:58.40px;height:9.20px;background:#1c1c1c;"></div><div style="left:357.00px;top:4.61px;width:13.40px;height:10.80px;background:#2d2d2d;"></div><div style="left:370.40px;top:4.91px;width:491.90px;height:10.20px;background:#6e6d7e;"></div><div style="left:0.80px;top:15.94px;width:355.20px;height:10.80px;background:#2a2a2a;"></div><div style="left:356.00px;top:15.64px;width:1.00px;height:11.40px;background:#1e1e1e;"></div><div style="left:4.10px;top:16.44px;width:8.20px;height:9.80px;background:#232323;"></div><div style="left:24.00px;top:16.44px;width:8.20px;height:9.80px;background:#1e1e1e;"></div><div style="left:34.00px;top:16.44px;width:8.20px;height:9.80px;background:#1e1e1e;"></div><div style="left:178.80px;top:16.44px;width:9.80px;height:9.80px;background:#1f1f1f;"></div><div style="left:189.80px;top:16.44px;width:9.00px;height:9.80px;background:#1f1f1f;"></div><div style="left:199.60px;top:16.44px;width:9.20px;height:9.80px;background:#1f1f1f;"></div><div style="left:209.30px;top:16.44px;width:8.60px;height:9.80px;background:#1f1f1f;"></div><div style="left:229.00px;top:16.44px;width:8.80px;height:9.80px;background:#1f1f1f;"></div><div style="left:239.00px;top:16.44px;width:8.80px;height:9.80px;background:#1f1f1f;"></div><div style="left:248.80px;top:16.44px;width:8.80px;height:9.80px;background:#1f1f1f;"></div><div style="left:283.20px;top:16.74px;width:58.40px;height:9.20px;background:#1c1c1c;"></div><div style="left:357.00px;top:15.94px;width:14.60px;height:10.80px;background:#2d2d2d;"></div><div style="left:371.60px;top:16.24px;width:490.70px;height:10.20px;background:#6e6d7e;"></div><div style="left:0.80px;top:27.27px;width:355.20px;height:10.80px;background:#2a2a2a;"></div><div style="left:356.00px;top:26.97px;width:1.00px;height:11.40px;background:#1e1e1e;"></div><div style="left:4.10px;top:27.77px;width:8.20px;height:9.80px;background:#232323;"></div><div style="left:24.00px;top:27.77px;width:8.20px;height:9.80px;background:#1e1e1e;"></div><div style="left:34.00px;top:27.77px;width:8.20px;height:9.80px;background:#1e1e1e;"></div><div style="left:178.80px;top:27.77px;width:9.80px;height:9.80px;background:#1f1f1f;"></div><div style="left:189.80px;top:27.77px;width:9.00px;height:9.80px;background:#1f1f1f;"></div><div style="left:199.60px;top:27.77px;width:9.20px;height:9.80px;background:#1f1f1f;"></div><div style="left:209.30px;top:27.77px;width:8.60px;height:9.80px;background:#1f1f1f;"></div><div style="left:229.00px;top:27.77px;width:8.80px;height:9.80px;background:#1f1f1f;"></div><div style="left:239.00px;top:27.77px;width:8.80px;height:9.80px;background:#1f1f1f;"></div><div style="left:248.80px;top:27.77px;width:8.80px;height:9.80px;background:#1f1f1f;"></div><div style="left:283.20px;top:28.07px;width:58.40px;height:9.20px;background:#1c1c1c;"></div><div style="left:357.00px;top:27.27px;width:10.70px;height:10.80px;background:#2d2d2d;"></div><div style="left:367.70px;top:27.57px;width:494.60px;height:10.20px;background:#6e6d7e;"></div><div style="left:0.80px;top:38.60px;width:355.20px;height:10.80px;background:#2a2a2a;"></div><div style="left:356.00px;top:38.30px;width:1.00px;height:11.40px;background:#1e1e1e;"></div><div style="left:4.10px;top:39.10px;width:8.20px;height:9.80px;background:#232323;"></div><div style="left:24.00px;top:39.10px;width:8.20px;height:9.80px;background:#1e1e1e;"></div><div style="left:34.00px;top:39.10px;width:8.20px;height:9.80px;background:#1e1e1e;"></div><div style="left:178.80px;top:39.10px;width:9.80px;height:9.80px;background:#1f1f1f;"></div><div style="left:189.80px;top:39.10px;width:9.00px;height:9.80px;background:#1f1f1f;"></div><div style="left:199.60px;top:39.10px;width:9.20px;height:9.80px;background:#1f1f1f;"></div><div style="left:209.30px;top:39.10px;width:8.60px;height:9.80px;background:#1f1f1f;"></div><div style="left:229.00px;top:39.10px;width:8.80px;height:9.80px;background:#1f1f1f;"></div><div style="left:239.00px;top:39.10px;width:8.80px;height:9.80px;background:#1f1f1f;"></div><div style="left:248.80px;top:39.10px;width:8.80px;height:9.80px;background:#1f1f1f;"></div><div style="left:283.20px;top:39.40px;width:58.40px;height:9.20px;background:#1c1c1c;"></div><div style="left:357.00px;top:38.60px;width:7.50px;height:10.80px;background:#2d2d2d;"></div><div style="left:364.50px;top:38.90px;width:497.80px;height:10.20px;background:#6e6d7e;"></div><div style="left:0.80px;top:49.93px;width:355.20px;height:10.80px;background:#2a2a2a;"></div><div style="left:356.00px;top:49.63px;width:1.00px;height:11.40px;background:#1e1e1e;"></div><div style="left:4.10px;top:50.43px;width:8.20px;height:9.80px;background:#232323;"></div><div style="left:24.00px;top:50.43px;width:8.20px;height:9.80px;background:#1e1e1e;"></div><div style="left:34.00px;top:50.43px;width:8.20px;height:9.80px;background:#1e1e1e;"></div><div style="left:178.80px;top:50.43px;width:9.80px;height:9.80px;background:#1f1f1f;"></div><div style="left:189.80px;top:50.43px;width:9.00px;height:9.80px;background:#1f1f1f;"></div><div style="left:199.60px;top:50.43px;width:9.20px;height:9.80px;background:#1f1f1f;"></div><div style="left:209.30px;top:50.43px;width:8.60px;height:9.80px;background:#1f1f1f;"></div><div style="left:229.00px;top:50.43px;width:8.80px;height:9.80px;background:#1f1f1f;"></div><div style="left:239.00px;top:50.43px;width:8.80px;height:9.80px;background:#1f1f1f;"></div><div style="left:248.80px;top:50.43px;width:8.80px;height:9.80px;background:#1f1f1f;"></div><div style="left:283.20px;top:50.73px;width:58.40px;height:9.20px;background:#1c1c1c;"></div><div style="left:357.00px;top:49.93px;width:9.00px;height:10.80px;background:#2d2d2d;"></div><div style="left:366.00px;top:50.23px;width:496.30px;height:10.20px;background:#6e6d7e;"></div><div style="left:0.80px;top:61.26px;width:355.20px;height:10.80px;background:#2a2a2a;"></div><div style="left:356.00px;top:60.96px;width:1.00px;height:11.40px;background:#1e1e1e;"></div><div style="left:4.10px;top:61.76px;width:8.20px;height:9.80px;background:#232323;"></div><div style="left:24.00px;top:61.76px;width:8.20px;height:9.80px;background:#1e1e1e;"></div><div style="left:34.00px;top:61.76px;width:8.20px;height:9.80px;background:#1e1e1e;"></div><div style="left:178.80px;top:61.76px;width:9.80px;height:9.80px;background:#1f1f1f;"></div><div style="left:189.80px;top:61.76px;width:9.00px;height:9.80px;background:#1f1f1f;"></div><div style="left:199.60px;top:61.76px;width:9.20px;height:9.80px;background:#1f1f1f;"></div><div style="left:209.30px;top:61.76px;width:8.60px;height:9.80px;background:#1f1f1f;"></div><div style="left:229.00px;top:61.76px;width:8.80px;height:9.80px;background:#1f1f1f;"></div><div style="left:239.00px;top:61.76px;width:8.80px;height:9.80px;background:#1f1f1f;"></div><div style="left:248.80px;top:61.76px;width:8.80px;height:9.80px;background:#1f1f1f;"></div><div style="left:283.20px;top:62.06px;width:58.40px;height:9.20px;background:#1c1c1c;"></div><div style="left:357.00px;top:61.26px;width:4.90px;height:10.80px;background:#2d2d2d;"></div><div style="left:361.90px;top:61.56px;width:496.40px;height:10.20px;background:#6e6d7e;"></div><div style="left:0.80px;top:72.59px;width:355.20px;height:10.80px;background:#2a2a2a;"></div><div style="left:356.00px;top:72.29px;width:1.00px;height:11.40px;background:#1e1e1e;"></div><div style="left:4.10px;top:73.09px;width:8.20px;height:9.80px;background:#232323;"></div><div style="left:24.00px;top:73.09px;width:8.20px;height:9.80px;background:#1e1e1e;"></div><div style="left:34.00px;top:73.09px;width:8.20px;height:9.80px;background:#1e1e1e;"></div><div style="left:178.80px;top:73.09px;width:9.80px;height:9.80px;background:#1f1f1f;"></div><div style="left:189.80px;top:73.09px;width:9.00px;height:9.80px;background:#1f1f1f;"></div><div style="left:199.60px;top:73.09px;width:9.20px;height:9.80px;background:#1f1f1f;"></div><div style="left:209.30px;top:73.09px;width:8.60px;height:9.80px;background:#1f1f1f;"></div><div style="left:229.00px;top:73.09px;width:8.80px;height:9.80px;background:#1f1f1f;"></div><div style="left:239.00px;top:73.09px;width:8.80px;height:9.80px;background:#1f1f1f;"></div><div style="left:248.80px;top:73.09px;width:8.80px;height:9.80px;background:#1f1f1f;"></div><div style="left:283.20px;top:73.39px;width:58.40px;height:9.20px;background:#1c1c1c;"></div><div style="left:357.00px;top:72.59px;width:19.90px;height:10.80px;background:#2d2d2d;"></div><div style="left:376.90px;top:72.89px;width:485.40px;height:10.20px;background:#6e6d7e;"></div><div style="left:0.80px;top:83.92px;width:355.20px;height:10.80px;background:#2a2a2a;"></div><div style="left:356.00px;top:83.62px;width:1.00px;height:11.40px;background:#1e1e1e;"></div><div style="left:4.10px;top:84.42px;width:8.20px;height:9.80px;background:#232323;"></div><div style="left:24.00px;top:84.42px;width:8.20px;height:9.80px;background:#1e1e1e;"></div><div style="left:34.00px;top:84.42px;width:8.20px;height:9.80px;background:#1e1e1e;"></div><div style="left:178.80px;top:84.42px;width:9.80px;height:9.80px;background:#1f1f1f;"></div><div style="left:189.80px;top:84.42px;width:9.00px;height:9.80px;background:#1f1f1f;"></div><div style="left:199.60px;top:84.42px;width:9.20px;height:9.80px;background:#1f1f1f;"></div><div style="left:209.30px;top:84.42px;width:8.60px;height:9.80px;background:#1f1f1f;"></div><div style="left:229.00px;top:84.42px;width:8.80px;height:9.80px;background:#1f1f1f;"></div><div style="left:239.00px;top:84.42px;width:8.80px;height:9.80px;background:#1f1f1f;"></div><div style="left:248.80px;top:84.42px;width:8.80px;height:9.80px;background:#1f1f1f;"></div><div style="left:283.20px;top:84.72px;width:58.40px;height:9.20px;background:#1c1c1c;"></div><div style="left:357.00px;top:83.92px;width:20.70px;height:10.80px;background:#2d2d2d;"></div><div style="left:377.70px;top:84.22px;width:484.60px;height:10.20px;background:#6e6d7e;"></div><div style="left:0.80px;top:95.25px;width:355.20px;height:10.80px;background:#2a2a2a;"></div><div style="left:356.00px;top:94.95px;width:1.00px;height:11.40px;background:#1e1e1e;"></div><div style="left:4.10px;top:95.75px;width:8.20px;height:9.80px;background:#232323;"></div><div style="left:24.00px;top:95.75px;width:8.20px;height:9.80px;background:#1e1e1e;"></div><div style="left:34.00px;top:95.75px;width:8.20px;height:9.80px;background:#1e1e1e;"></div><div style="left:178.80px;top:95.75px;width:9.80px;height:9.80px;background:#1f1f1f;"></div><div style="left:189.80px;top:95.75px;width:9.00px;height:9.80px;background:#1f1f1f;"></div><div style="left:199.60px;top:95.75px;width:9.20px;height:9.80px;background:#1f1f1f;"></div><div style="left:209.30px;top:95.75px;width:8.60px;height:9.80px;background:#1f1f1f;"></div><div style="left:229.00px;top:95.75px;width:8.80px;height:9.80px;background:#1f1f1f;"></div><div style="left:239.00px;top:95.75px;width:8.80px;height:9.80px;background:#1f1f1f;"></div><div style="left:248.80px;top:95.75px;width:8.80px;height:9.80px;background:#1f1f1f;"></div><div style="left:283.20px;top:96.05px;width:58.40px;height:9.20px;background:#1c1c1c;"></div><div style="left:357.00px;top:95.25px;width:16.00px;height:10.80px;background:#2d2d2d;"></div><div style="left:373.00px;top:95.55px;width:489.30px;height:10.20px;background:#6e6d7e;"></div><div style="left:0.80px;top:106.58px;width:355.20px;height:10.80px;background:#2a2a2a;"></div><div style="left:356.00px;top:106.28px;width:1.00px;height:11.40px;background:#1e1e1e;"></div><div style="left:4.10px;top:107.08px;width:8.20px;height:9.80px;background:#232323;"></div><div style="left:24.00px;top:107.08px;width:8.20px;height:9.80px;background:#1e1e1e;"></div><div style="left:34.00px;top:107.08px;width:8.20px;height:9.80px;background:#1e1e1e;"></div><div style="left:178.80px;top:107.08px;width:9.80px;height:9.80px;background:#1f1f1f;"></div><div style="left:189.80px;top:107.08px;width:9.00px;height:9.80px;background:#1f1f1f;"></div><div style="left:199.60px;top:107.08px;width:9.20px;height:9.80px;background:#1f1f1f;"></div><div style="left:209.30px;top:107.08px;width:8.60px;height:9.80px;background:#1f1f1f;"></div><div style="left:229.00px;top:107.08px;width:8.80px;height:9.80px;background:#1f1f1f;"></div><div style="left:239.00px;top:107.08px;width:8.80px;height:9.80px;background:#1f1f1f;"></div><div style="left:248.80px;top:107.08px;width:8.80px;height:9.80px;background:#1f1f1f;"></div><div style="left:283.20px;top:107.38px;width:58.40px;height:9.20px;background:#1c1c1c;"></div><div style="left:357.00px;top:106.58px;width:14.00px;height:10.80px;background:#2d2d2d;"></div><div style="left:371.00px;top:106.88px;width:491.30px;height:10.20px;background:#6e6d7e;"></div><div style="left:0.80px;top:117.91px;width:355.20px;height:10.80px;background:#2a2a2a;"></div><div style="left:356.00px;top:117.61px;width:1.00px;height:11.40px;background:#1e1e1e;"></div><div style="left:4.10px;top:118.41px;width:8.20px;height:9.80px;background:#232323;"></div><div style="left:24.00px;top:118.41px;width:8.20px;height:9.80px;background:#1e1e1e;"></div><div style="left:34.00px;top:118.41px;width:8.20px;height:9.80px;background:#1e1e1e;"></div><div style="left:178.80px;top:118.41px;width:9.80px;height:9.80px;background:#1f1f1f;"></div><div style="left:189.80px;top:118.41px;width:9.00px;height:9.80px;background:#1f1f1f;"></div><div style="left:199.60px;top:118.41px;width:9.20px;height:9.80px;background:#1f1f1f;"></div><div style="left:209.30px;top:118.41px;width:8.60px;height:9.80px;background:#1f1f1f;"></div><div style="left:229.00px;top:118.41px;width:8.80px;height:9.80px;background:#1f1f1f;"></div><div style="left:239.00px;top:118.41px;width:8.80px;height:9.80px;background:#1f1f1f;"></div><div style="left:248.80px;top:118.41px;width:8.80px;height:9.80px;background:#1f1f1f;"></div><div style="left:283.20px;top:118.71px;width:58.40px;height:9.20px;background:#1c1c1c;"></div><div style="left:357.00px;top:117.91px;width:14.60px;height:10.80px;background:#2d2d2d;"></div><div style="left:371.60px;top:118.21px;width:490.70px;height:10.20px;background:#6e6d7e;"></div><div style="left:0.80px;top:129.24px;width:355.20px;height:10.80px;background:#2a2a2a;"></div><div style="left:356.00px;top:128.94px;width:1.00px;height:11.40px;background:#1e1e1e;"></div><div style="left:4.10px;top:129.74px;width:8.20px;height:9.80px;background:#232323;"></div><div style="left:24.00px;top:129.74px;width:8.20px;height:9.80px;background:#1e1e1e;"></div><div style="left:34.00px;top:129.74px;width:8.20px;height:9.80px;background:#1e1e1e;"></div><div style="left:178.80px;top:129.74px;width:9.80px;height:9.80px;background:#1f1f1f;"></div><div style="left:189.80px;top:129.74px;width:9.00px;height:9.80px;background:#1f1f1f;"></div><div style="left:199.60px;top:129.74px;width:9.20px;height:9.80px;background:#1f1f1f;"></div><div style="left:209.30px;top:129.74px;width:8.60px;height:9.80px;background:#1f1f1f;"></div><div style="left:229.00px;top:129.74px;width:8.80px;height:9.80px;background:#1f1f1f;"></div><div style="left:239.00px;top:129.74px;width:8.80px;height:9.80px;background:#1f1f1f;"></div><div style="left:248.80px;top:129.74px;width:8.80px;height:9.80px;background:#1f1f1f;"></div><div style="left:283.20px;top:130.04px;width:58.40px;height:9.20px;background:#1c1c1c;"></div><div style="left:357.00px;top:129.24px;width:10.00px;height:10.80px;background:#2d2d2d;"></div><div style="left:367.00px;top:129.54px;width:495.30px;height:10.20px;background:#6e6d7e;"></div><div style="left:0.80px;top:140.57px;width:355.20px;height:10.80px;background:#2a2a2a;"></div><div style="left:356.00px;top:140.27px;width:1.00px;height:11.40px;background:#1e1e1e;"></div><div style="left:4.10px;top:141.07px;width:8.20px;height:9.80px;background:#232323;"></div><div style="left:24.00px;top:141.07px;width:8.20px;height:9.80px;background:#1e1e1e;"></div><div style="left:34.00px;top:141.07px;width:8.20px;height:9.80px;background:#1e1e1e;"></div><div style="left:178.80px;top:141.07px;width:9.80px;height:9.80px;background:#1f1f1f;"></div><div style="left:189.80px;top:141.07px;width:9.00px;height:9.80px;background:#1f1f1f;"></div><div style="left:199.60px;top:141.07px;width:9.20px;height:9.80px;background:#1f1f1f;"></div><div style="left:209.30px;top:141.07px;width:8.60px;height:9.80px;background:#1f1f1f;"></div><div style="left:229.00px;top:141.07px;width:8.80px;height:9.80px;background:#1f1f1f;"></div><div style="left:239.00px;top:141.07px;width:8.80px;height:9.80px;background:#1f1f1f;"></div><div style="left:248.80px;top:141.07px;width:8.80px;height:9.80px;background:#1f1f1f;"></div><div style="left:283.20px;top:141.37px;width:58.40px;height:9.20px;background:#1c1c1c;"></div><div style="left:357.00px;top:140.57px;width:8.00px;height:10.80px;background:#2d2d2d;"></div><div style="left:365.00px;top:140.87px;width:497.30px;height:10.20px;background:#6e6d7e;"></div><div style="left:0.80px;top:151.90px;width:355.20px;height:10.80px;background:#393939;"></div><div style="left:356.00px;top:151.60px;width:1.00px;height:11.40px;background:#1e1e1e;"></div><div style="left:4.10px;top:152.40px;width:8.20px;height:9.80px;background:#333;"></div><div style="left:24.00px;top:152.40px;width:8.20px;height:9.80px;background:#303030;"></div><div style="left:34.00px;top:152.40px;width:8.20px;height:9.80px;background:#303030;"></div><div style="left:178.80px;top:152.40px;width:9.80px;height:9.80px;background:#333;"></div><div style="left:189.80px;top:152.40px;width:9.00px;height:9.80px;background:#333;"></div><div style="left:199.60px;top:152.40px;width:9.20px;height:9.80px;background:#333;"></div><div style="left:209.30px;top:152.40px;width:8.60px;height:9.80px;background:#333;"></div><div style="left:229.00px;top:152.40px;width:8.80px;height:9.80px;background:#333;"></div><div style="left:239.00px;top:152.40px;width:8.80px;height:9.80px;background:#333;"></div><div style="left:248.80px;top:152.40px;width:8.80px;height:9.80px;background:#333;"></div><div style="left:283.20px;top:152.70px;width:58.40px;height:9.20px;background:#1c1c1c;"></div><div style="left:357.00px;top:151.90px;width:8.80px;height:10.80px;background:#3d3d3d;"></div><div style="left:365.80px;top:152.20px;width:496.50px;height:10.20px;background:#a09fc6;"></div><div style="left:102.00px;top:152.30px;width:73.50px;height:10.00px;background:#a6a6a6;"></div><div style="left:0.80px;top:163.23px;width:355.20px;height:10.80px;background:#2a2a2a;"></div><div style="left:356.00px;top:162.93px;width:1.00px;height:11.40px;background:#1e1e1e;"></div><div style="left:4.10px;top:163.73px;width:8.20px;height:9.80px;background:#232323;"></div><div style="left:24.00px;top:163.73px;width:8.20px;height:9.80px;background:#1e1e1e;"></div><div style="left:34.00px;top:163.73px;width:8.20px;height:9.80px;background:#1e1e1e;"></div><div style="left:178.80px;top:163.73px;width:9.80px;height:9.80px;background:#1f1f1f;"></div><div style="left:189.80px;top:163.73px;width:9.00px;height:9.80px;background:#1f1f1f;"></div><div style="left:199.60px;top:163.73px;width:9.20px;height:9.80px;background:#1f1f1f;"></div><div style="left:209.30px;top:163.73px;width:8.60px;height:9.80px;background:#1f1f1f;"></div><div style="left:229.00px;top:163.73px;width:8.80px;height:9.80px;background:#1f1f1f;"></div><div style="left:239.00px;top:163.73px;width:8.80px;height:9.80px;background:#1f1f1f;"></div><div style="left:248.80px;top:163.73px;width:8.80px;height:9.80px;background:#1f1f1f;"></div><div style="left:283.20px;top:164.03px;width:58.40px;height:9.20px;background:#1c1c1c;"></div><div style="left:357.00px;top:163.23px;width:4.00px;height:10.80px;background:#2d2d2d;"></div><div style="left:361.00px;top:163.53px;width:496.70px;height:10.20px;background:#6e6d7e;"></div><div style="left:0.80px;top:174.56px;width:355.20px;height:10.80px;background:#2a2a2a;"></div><div style="left:356.00px;top:174.26px;width:1.00px;height:11.40px;background:#1e1e1e;"></div><div style="left:4.10px;top:175.06px;width:8.20px;height:9.80px;background:#232323;"></div><div style="left:24.00px;top:175.06px;width:8.20px;height:9.80px;background:#1e1e1e;"></div><div style="left:34.00px;top:175.06px;width:8.20px;height:9.80px;background:#1e1e1e;"></div><div style="left:178.80px;top:175.06px;width:9.80px;height:9.80px;background:#1f1f1f;"></div><div style="left:189.80px;top:175.06px;width:9.00px;height:9.80px;background:#1f1f1f;"></div><div style="left:199.60px;top:175.06px;width:9.20px;height:9.80px;background:#1f1f1f;"></div><div style="left:209.30px;top:175.06px;width:8.60px;height:9.80px;background:#1f1f1f;"></div><div style="left:229.00px;top:175.06px;width:8.80px;height:9.80px;background:#1f1f1f;"></div><div style="left:239.00px;top:175.06px;width:8.80px;height:9.80px;background:#1f1f1f;"></div><div style="left:248.80px;top:175.06px;width:8.80px;height:9.80px;background:#1f1f1f;"></div><div style="left:283.20px;top:175.36px;width:58.40px;height:9.20px;background:#1c1c1c;"></div><div style="left:357.00px;top:174.56px;width:4.00px;height:10.80px;background:#2d2d2d;"></div><div style="left:361.00px;top:174.86px;width:496.70px;height:10.20px;background:#733535;"></div><span class="t" style="left:71.70px;top:-5.32px;font-size:8.4px;color:#b0b0b0;transform:scaleX(0.8884);">12</span><span class="t" style="left:103.80px;top:-5.32px;font-size:8.4px;color:#b0b0b0;transform:scaleX(0.9);">20</span><span class="t" style="left:209.50px;top:-5.44px;font-size:8.6px;color:#a8a8a8;font-style:italic;font-family:"Liberation Serif",serif;transform:scaleX(1.2408);">fx</span><span class="t" style="left:287.80px;top:-5.32px;font-size:8.4px;color:#b8b8b8;transform:scaleX(0.8566);">None</span><span class="t" style="left:71.70px;top:6.01px;font-size:8.4px;color:#b0b0b0;transform:scaleX(0.8884);">13</span><span class="t" style="left:103.80px;top:6.01px;font-size:8.4px;color:#b0b0b0;transform:scaleX(0.9);">15</span><span class="t" style="left:209.50px;top:5.89px;font-size:8.6px;color:#a8a8a8;font-style:italic;font-family:"Liberation Serif",serif;transform:scaleX(1.2408);">fx</span><span class="t" style="left:287.80px;top:6.01px;font-size:8.4px;color:#b8b8b8;transform:scaleX(0.8566);">None</span><span class="t" style="left:71.70px;top:17.34px;font-size:8.4px;color:#b0b0b0;transform:scaleX(0.8884);">14</span><span class="t" style="left:103.80px;top:17.34px;font-size:8.4px;color:#b0b0b0;transform:scaleX(0.9);">18</span><span class="t" style="left:209.50px;top:17.22px;font-size:8.6px;color:#a8a8a8;font-style:italic;font-family:"Liberation Serif",serif;transform:scaleX(1.2408);">fx</span><span class="t" style="left:287.80px;top:17.34px;font-size:8.4px;color:#b8b8b8;transform:scaleX(0.8566);">None</span><span class="t" style="left:71.70px;top:28.67px;font-size:8.4px;color:#b0b0b0;transform:scaleX(0.8884);">15</span><span class="t" style="left:103.80px;top:28.67px;font-size:8.4px;color:#b0b0b0;transform:scaleX(0.9);">11</span><span class="t" style="left:209.50px;top:28.55px;font-size:8.6px;color:#a8a8a8;font-style:italic;font-family:"Liberation Serif",serif;transform:scaleX(1.2408);">fx</span><span class="t" style="left:287.80px;top:28.67px;font-size:8.4px;color:#b8b8b8;transform:scaleX(0.8566);">None</span><span class="t" style="left:71.70px;top:40.00px;font-size:8.4px;color:#b0b0b0;transform:scaleX(0.8884);">16</span><span class="t" style="left:103.80px;top:40.00px;font-size:8.4px;color:#b0b0b0;transform:scaleX(0.9);">6</span><span class="t" style="left:209.50px;top:39.88px;font-size:8.6px;color:#a8a8a8;font-style:italic;font-family:"Liberation Serif",serif;transform:scaleX(1.2408);">fx</span><span class="t" style="left:287.80px;top:40.00px;font-size:8.4px;color:#b8b8b8;transform:scaleX(0.8566);">None</span><span class="t" style="left:71.70px;top:51.33px;font-size:8.4px;color:#b0b0b0;transform:scaleX(0.8884);">17</span><span class="t" style="left:103.80px;top:51.33px;font-size:8.4px;color:#b0b0b0;transform:scaleX(0.9);">9</span><span class="t" style="left:209.50px;top:51.21px;font-size:8.6px;color:#a8a8a8;font-style:italic;font-family:"Liberation Serif",serif;transform:scaleX(1.2408);">fx</span><span class="t" style="left:287.80px;top:51.33px;font-size:8.4px;color:#b8b8b8;transform:scaleX(0.8566);">None</span><span class="t" style="left:71.70px;top:62.66px;font-size:8.4px;color:#b0b0b0;transform:scaleX(0.8884);">18</span><span class="t" style="left:103.80px;top:62.66px;font-size:8.4px;color:#b0b0b0;transform:scaleX(0.9);">2</span><span class="t" style="left:209.50px;top:62.54px;font-size:8.6px;color:#a8a8a8;font-style:italic;font-family:"Liberation Serif",serif;transform:scaleX(1.2408);">fx</span><span class="t" style="left:287.80px;top:62.66px;font-size:8.4px;color:#b8b8b8;transform:scaleX(0.8566);">None</span><span class="t" style="left:71.70px;top:73.99px;font-size:8.4px;color:#b0b0b0;transform:scaleX(0.8884);">19</span><span class="t" style="left:103.80px;top:73.99px;font-size:8.4px;color:#b0b0b0;transform:scaleX(0.9);">25</span><span class="t" style="left:287.80px;top:73.99px;font-size:8.4px;color:#b8b8b8;transform:scaleX(0.8566);">None</span><span class="t" style="left:71.70px;top:85.32px;font-size:8.4px;color:#b0b0b0;transform:scaleX(0.8884);">20</span><span class="t" style="left:103.80px;top:85.32px;font-size:8.4px;color:#b0b0b0;transform:scaleX(0.9);">26</span><span class="t" style="left:287.80px;top:85.32px;font-size:8.4px;color:#b8b8b8;transform:scaleX(0.8566);">None</span><span class="t" style="left:71.70px;top:96.65px;font-size:8.4px;color:#b0b0b0;transform:scaleX(0.8884);">21</span><span class="t" style="left:103.80px;top:96.65px;font-size:8.4px;color:#b0b0b0;transform:scaleX(0.9);">19</span><span class="t" style="left:209.50px;top:96.53px;font-size:8.6px;color:#a8a8a8;font-style:italic;font-family:"Liberation Serif",serif;transform:scaleX(1.2408);">fx</span><span class="t" style="left:287.80px;top:96.65px;font-size:8.4px;color:#b8b8b8;transform:scaleX(0.8566);">None</span><span class="t" style="left:71.70px;top:107.98px;font-size:8.4px;color:#b0b0b0;transform:scaleX(0.8884);">22</span><span class="t" style="left:103.80px;top:107.98px;font-size:8.4px;color:#b0b0b0;transform:scaleX(0.9);">16</span><span class="t" style="left:209.50px;top:107.86px;font-size:8.6px;color:#a8a8a8;font-style:italic;font-family:"Liberation Serif",serif;transform:scaleX(1.2408);">fx</span><span class="t" style="left:287.80px;top:107.98px;font-size:8.4px;color:#b8b8b8;transform:scaleX(0.8566);">None</span><span class="t" style="left:71.70px;top:119.31px;font-size:8.4px;color:#b0b0b0;transform:scaleX(0.8884);">23</span><span class="t" style="left:103.80px;top:119.31px;font-size:8.4px;color:#b0b0b0;transform:scaleX(0.9);">17</span><span class="t" style="left:209.50px;top:119.19px;font-size:8.6px;color:#a8a8a8;font-style:italic;font-family:"Liberation Serif",serif;transform:scaleX(1.2408);">fx</span><span class="t" style="left:287.80px;top:119.31px;font-size:8.4px;color:#b8b8b8;transform:scaleX(0.8566);">None</span><span class="t" style="left:71.70px;top:130.64px;font-size:8.4px;color:#b0b0b0;transform:scaleX(0.8884);">24</span><span class="t" style="left:103.80px;top:130.64px;font-size:8.4px;color:#b0b0b0;transform:scaleX(0.9);">10</span><span class="t" style="left:209.50px;top:130.52px;font-size:8.6px;color:#a8a8a8;font-style:italic;font-family:"Liberation Serif",serif;transform:scaleX(1.2408);">fx</span><span class="t" style="left:287.80px;top:130.64px;font-size:8.4px;color:#b8b8b8;transform:scaleX(0.8566);">None</span><span class="t" style="left:71.70px;top:141.97px;font-size:8.4px;color:#b0b0b0;transform:scaleX(0.8884);">25</span><span class="t" style="left:103.80px;top:141.97px;font-size:8.4px;color:#b0b0b0;transform:scaleX(0.9);">7</span><span class="t" style="left:209.50px;top:141.85px;font-size:8.6px;color:#a8a8a8;font-style:italic;font-family:"Liberation Serif",serif;transform:scaleX(1.2408);">fx</span><span class="t" style="left:287.80px;top:141.97px;font-size:8.4px;color:#b8b8b8;transform:scaleX(0.8566);">None</span><span class="t" style="left:71.70px;top:153.30px;font-size:8.4px;color:#b0b0b0;transform:scaleX(0.8884);">26</span><span class="t" style="left:103.80px;top:153.30px;font-size:8.4px;color:#1a1a1a;transform:scaleX(0.9);">8</span><span class="t" style="left:209.50px;top:153.18px;font-size:8.6px;color:#a8a8a8;font-style:italic;font-family:"Liberation Serif",serif;transform:scaleX(1.2408);">fx</span><span class="t" style="left:287.80px;top:153.30px;font-size:8.4px;color:#b8b8b8;transform:scaleX(0.8566);">None</span><span class="t" style="left:71.70px;top:164.63px;font-size:8.4px;color:#b0b0b0;transform:scaleX(0.8884);">27</span><span class="t" style="left:103.80px;top:164.63px;font-size:8.4px;color:#b0b0b0;transform:scaleX(0.9);">1</span><span class="t" style="left:209.50px;top:164.51px;font-size:8.6px;color:#a8a8a8;font-style:italic;font-family:"Liberation Serif",serif;transform:scaleX(1.2408);">fx</span><span class="t" style="left:287.80px;top:164.63px;font-size:8.4px;color:#b8b8b8;transform:scaleX(0.8566);">None</span><span class="t" style="left:71.70px;top:175.96px;font-size:8.4px;color:#b0b0b0;transform:scaleX(0.8884);">28</span><span class="t" style="left:103.80px;top:175.96px;font-size:8.4px;color:#a9b6c9;transform:scaleX(0.9399);">[White Solid 2]</span><span class="t" style="left:287.80px;top:175.96px;font-size:8.4px;color:#b8b8b8;transform:scaleX(0.8566);">None</span><svg style="position:absolute;left:0;top:-351.2px" width="1024" height="576"><path d="M5 349.88 Q8.5 345.88 12 349.88 Q8.5 353.88 5 349.88 Z" fill="#d0d0d0"/><circle cx="8.5" cy="349.88" r="1.3" fill="#232323"/><path d="M50.6 348.08 L52.4 349.88 L50.6 351.68" stroke="#7a7a7a" stroke-width="0.8" fill="none"/><rect x="57.7" y="345.68" width="8.2" height="8.3" fill="#b4b4d8"/><path d="M93.3 345.98 H97.8 L99 347.18 V353.68 Q99 354.48 98.2 354.48 H93.3 Q92.5 354.48 92.5 353.68 V346.78 Q92.5 345.98 93.3 345.98 Z" fill="#3a0000" stroke="#d98400" stroke-width="0.85"/><path d="M94.3 349.28 L95.2 347.08 L96.1 349.28 M97.2 347.68 V349.28" stroke="#f09000" stroke-width="0.7" fill="none"/><rect x="95" y="351.48" width="1.6" height="1.6" fill="#bdbdbd"/><path d="M180.5 349.88 Q180.5 345.97999999999996 183.9 345.97999999999996 Q187.3 345.97999999999996 187.3 349.88 Z" fill="#c8c8c8"/><rect x="179.4" y="349.78" width="9" height="1" fill="#c8c8c8"/><path d="M182.4 350.58 V353.47999999999996 M185.4 350.58 V353.47999999999996" stroke="#c8c8c8" stroke-width="0.8"/><rect x="180.1" y="353.18" width="7.6" height="0.8" fill="#c8c8c8"/><path d="M183.9 347.38 V349.58" stroke="#232323" stroke-width="0.6"/><path d="M180.5 348.58 H187.3" stroke="#232323" stroke-width="0.5"/><circle cx="194.1" cy="349.88" r="1.7" fill="none" stroke="#c8c8c8" stroke-width="0.9"/><path d="M196.60 349.88 L197.70 349.88" stroke="#c8c8c8" stroke-width="0.8"/><path d="M195.87 351.65 L196.65 352.43" stroke="#c8c8c8" stroke-width="0.8"/><path d="M194.10 352.38 L194.10 353.48" stroke="#c8c8c8" stroke-width="0.8"/><path d="M192.33 351.65 L191.55 352.43" stroke="#c8c8c8" stroke-width="0.8"/><path d="M191.60 349.88 L190.50 349.88" stroke="#c8c8c8" stroke-width="0.8"/><path d="M192.33 348.11 L191.55 347.33" stroke="#c8c8c8" stroke-width="0.8"/><path d="M194.10 347.38 L194.10 346.28" stroke="#c8c8c8" stroke-width="0.8"/><path d="M195.87 348.11 L196.65 347.33" stroke="#c8c8c8" stroke-width="0.8"/><path d="M200.5 353.88 L208.3 345.88" stroke="#c8c8c8" stroke-width="0.9"/><path d="M274.4 350.18 Q274.4 348.58 275.6 349.08 Q276.6 350.38 275 351.58 Q272.5 351.88 272.3 349.38 Q272.5 346.38 275.8 346.68 Q278.8 347.58 278.5 350.68 Q277.8 354.08 274.3 353.88" stroke="#c0c0c0" stroke-width="0.8" fill="none"/><path d="M334.8 348.88 L336.6 350.68 L338.4 348.88" stroke="#aaa" stroke-width="0.8" fill="none"/><path d="M5 361.21000000000004 Q8.5 357.21000000000004 12 361.21000000000004 Q8.5 365.21000000000004 5 361.21000000000004 Z" fill="#d0d0d0"/><circle cx="8.5" cy="361.21000000000004" r="1.3" fill="#232323"/><path d="M50.6 359.41 L52.4 361.21000000000004 L50.6 363.01000000000005" stroke="#7a7a7a" stroke-width="0.8" fill="none"/><rect x="57.7" y="357.01000000000005" width="8.2" height="8.3" fill="#b4b4d8"/><path d="M93.3 357.31000000000006 H97.8 L99 358.51000000000005 V365.01000000000005 Q99 365.81000000000006 98.2 365.81000000000006 H93.3 Q92.5 365.81000000000006 92.5 365.01000000000005 V358.11 Q92.5 357.31000000000006 93.3 357.31000000000006 Z" fill="#3a0000" stroke="#d98400" stroke-width="0.85"/><path d="M94.3 360.61 L95.2 358.41 L96.1 360.61 M97.2 359.01000000000005 V360.61" stroke="#f09000" stroke-width="0.7" fill="none"/><rect x="95" y="362.81000000000006" width="1.6" height="1.6" fill="#bdbdbd"/><path d="M180.5 361.21000000000004 Q180.5 357.31 183.9 357.31 Q187.3 357.31 187.3 361.21000000000004 Z" fill="#c8c8c8"/><rect x="179.4" y="361.11" width="9" height="1" fill="#c8c8c8"/><path d="M182.4 361.91 V364.81 M185.4 361.91 V364.81" stroke="#c8c8c8" stroke-width="0.8"/><rect x="180.1" y="364.51000000000005" width="7.6" height="0.8" fill="#c8c8c8"/><path d="M183.9 358.71000000000004 V360.91" stroke="#232323" stroke-width="0.6"/><path d="M180.5 359.91 H187.3" stroke="#232323" stroke-width="0.5"/><circle cx="194.1" cy="361.21000000000004" r="1.7" fill="none" stroke="#c8c8c8" stroke-width="0.9"/><path d="M196.60 361.21 L197.70 361.21" stroke="#c8c8c8" stroke-width="0.8"/><path d="M195.87 362.98 L196.65 363.76" stroke="#c8c8c8" stroke-width="0.8"/><path d="M194.10 363.71 L194.10 364.81" stroke="#c8c8c8" stroke-width="0.8"/><path d="M192.33 362.98 L191.55 363.76" stroke="#c8c8c8" stroke-width="0.8"/><path d="M191.60 361.21 L190.50 361.21" stroke="#c8c8c8" stroke-width="0.8"/><path d="M192.33 359.44 L191.55 358.66" stroke="#c8c8c8" stroke-width="0.8"/><path d="M194.10 358.71 L194.10 357.61" stroke="#c8c8c8" stroke-width="0.8"/><path d="M195.87 359.44 L196.65 358.66" stroke="#c8c8c8" stroke-width="0.8"/><path d="M200.5 365.21000000000004 L208.3 357.21000000000004" stroke="#c8c8c8" stroke-width="0.9"/><path d="M274.4 361.51000000000005 Q274.4 359.91 275.6 360.41 Q276.6 361.71000000000004 275 362.91 Q272.5 363.21000000000004 272.3 360.71000000000004 Q272.5 357.71000000000004 275.8 358.01000000000005 Q278.8 358.91 278.5 362.01000000000005 Q277.8 365.41 274.3 365.21000000000004" stroke="#c0c0c0" stroke-width="0.8" fill="none"/><path d="M334.8 360.21000000000004 L336.6 362.01000000000005 L338.4 360.21000000000004" stroke="#aaa" stroke-width="0.8" fill="none"/><path d="M5 372.53999999999996 Q8.5 368.53999999999996 12 372.53999999999996 Q8.5 376.53999999999996 5 372.53999999999996 Z" fill="#d0d0d0"/><circle cx="8.5" cy="372.53999999999996" r="1.3" fill="#232323"/><path d="M50.6 370.73999999999995 L52.4 372.53999999999996 L50.6 374.34" stroke="#7a7a7a" stroke-width="0.8" fill="none"/><rect x="57.7" y="368.34" width="8.2" height="8.3" fill="#b4b4d8"/><path d="M93.3 368.64 H97.8 L99 369.84 V376.34 Q99 377.14 98.2 377.14 H93.3 Q92.5 377.14 92.5 376.34 V369.43999999999994 Q92.5 368.64 93.3 368.64 Z" fill="#3a0000" stroke="#d98400" stroke-width="0.85"/><path d="M94.3 371.93999999999994 L95.2 369.73999999999995 L96.1 371.93999999999994 M97.2 370.34 V371.93999999999994" stroke="#f09000" stroke-width="0.7" fill="none"/><rect x="95" y="374.14" width="1.6" height="1.6" fill="#bdbdbd"/><path d="M180.5 372.53999999999996 Q180.5 368.63999999999993 183.9 368.63999999999993 Q187.3 368.63999999999993 187.3 372.53999999999996 Z" fill="#c8c8c8"/><rect x="179.4" y="372.43999999999994" width="9" height="1" fill="#c8c8c8"/><path d="M182.4 373.23999999999995 V376.13999999999993 M185.4 373.23999999999995 V376.13999999999993" stroke="#c8c8c8" stroke-width="0.8"/><rect x="180.1" y="375.84" width="7.6" height="0.8" fill="#c8c8c8"/><path d="M183.9 370.03999999999996 V372.23999999999995" stroke="#232323" stroke-width="0.6"/><path d="M180.5 371.23999999999995 H187.3" stroke="#232323" stroke-width="0.5"/><circle cx="194.1" cy="372.53999999999996" r="1.7" fill="none" stroke="#c8c8c8" stroke-width="0.9"/><path d="M196.60 372.54 L197.70 372.54" stroke="#c8c8c8" stroke-width="0.8"/><path d="M195.87 374.31 L196.65 375.09" stroke="#c8c8c8" stroke-width="0.8"/><path d="M194.10 375.04 L194.10 376.14" stroke="#c8c8c8" stroke-width="0.8"/><path d="M192.33 374.31 L191.55 375.09" stroke="#c8c8c8" stroke-width="0.8"/><path d="M191.60 372.54 L190.50 372.54" stroke="#c8c8c8" stroke-width="0.8"/><path d="M192.33 370.77 L191.55 369.99" stroke="#c8c8c8" stroke-width="0.8"/><path d="M194.10 370.04 L194.10 368.94" stroke="#c8c8c8" stroke-width="0.8"/><path d="M195.87 370.77 L196.65 369.99" stroke="#c8c8c8" stroke-width="0.8"/><path d="M200.5 376.53999999999996 L208.3 368.53999999999996" stroke="#c8c8c8" stroke-width="0.9"/><path d="M274.4 372.84 Q274.4 371.23999999999995 275.6 371.73999999999995 Q276.6 373.03999999999996 275 374.23999999999995 Q272.5 374.53999999999996 272.3 372.03999999999996 Q272.5 369.03999999999996 275.8 369.34 Q278.8 370.23999999999995 278.5 373.34 Q277.8 376.73999999999995 274.3 376.53999999999996" stroke="#c0c0c0" stroke-width="0.8" fill="none"/><path d="M334.8 371.53999999999996 L336.6 373.34 L338.4 371.53999999999996" stroke="#aaa" stroke-width="0.8" fill="none"/><path d="M5 383.87 Q8.5 379.87 12 383.87 Q8.5 387.87 5 383.87 Z" fill="#d0d0d0"/><circle cx="8.5" cy="383.87" r="1.3" fill="#232323"/><path d="M50.6 382.07 L52.4 383.87 L50.6 385.67" stroke="#7a7a7a" stroke-width="0.8" fill="none"/><rect x="57.7" y="379.67" width="8.2" height="8.3" fill="#b4b4d8"/><path d="M93.3 379.97 H97.8 L99 381.17 V387.67 Q99 388.47 98.2 388.47 H93.3 Q92.5 388.47 92.5 387.67 V380.77 Q92.5 379.97 93.3 379.97 Z" fill="#3a0000" stroke="#d98400" stroke-width="0.85"/><path d="M94.3 383.27 L95.2 381.07 L96.1 383.27 M97.2 381.67 V383.27" stroke="#f09000" stroke-width="0.7" fill="none"/><rect x="95" y="385.47" width="1.6" height="1.6" fill="#bdbdbd"/><path d="M180.5 383.87 Q180.5 379.96999999999997 183.9 379.96999999999997 Q187.3 379.96999999999997 187.3 383.87 Z" fill="#c8c8c8"/><rect x="179.4" y="383.77" width="9" height="1" fill="#c8c8c8"/><path d="M182.4 384.57 V387.46999999999997 M185.4 384.57 V387.46999999999997" stroke="#c8c8c8" stroke-width="0.8"/><rect x="180.1" y="387.17" width="7.6" height="0.8" fill="#c8c8c8"/><path d="M183.9 381.37 V383.57" stroke="#232323" stroke-width="0.6"/><path d="M180.5 382.57 H187.3" stroke="#232323" stroke-width="0.5"/><circle cx="194.1" cy="383.87" r="1.7" fill="none" stroke="#c8c8c8" stroke-width="0.9"/><path d="M196.60 383.87 L197.70 383.87" stroke="#c8c8c8" stroke-width="0.8"/><path d="M195.87 385.64 L196.65 386.42" stroke="#c8c8c8" stroke-width="0.8"/><path d="M194.10 386.37 L194.10 387.47" stroke="#c8c8c8" stroke-width="0.8"/><path d="M192.33 385.64 L191.55 386.42" stroke="#c8c8c8" stroke-width="0.8"/><path d="M191.60 383.87 L190.50 383.87" stroke="#c8c8c8" stroke-width="0.8"/><path d="M192.33 382.10 L191.55 381.32" stroke="#c8c8c8" stroke-width="0.8"/><path d="M194.10 381.37 L194.10 380.27" stroke="#c8c8c8" stroke-width="0.8"/><path d="M195.87 382.10 L196.65 381.32" stroke="#c8c8c8" stroke-width="0.8"/><path d="M200.5 387.87 L208.3 379.87" stroke="#c8c8c8" stroke-width="0.9"/><path d="M274.4 384.17 Q274.4 382.57 275.6 383.07 Q276.6 384.37 275 385.57 Q272.5 385.87 272.3 383.37 Q272.5 380.37 275.8 380.67 Q278.8 381.57 278.5 384.67 Q277.8 388.07 274.3 387.87" stroke="#c0c0c0" stroke-width="0.8" fill="none"/><path d="M334.8 382.87 L336.6 384.67 L338.4 382.87" stroke="#aaa" stroke-width="0.8" fill="none"/><path d="M5 395.2 Q8.5 391.2 12 395.2 Q8.5 399.2 5 395.2 Z" fill="#d0d0d0"/><circle cx="8.5" cy="395.2" r="1.3" fill="#232323"/><path d="M50.6 393.4 L52.4 395.2 L50.6 397.0" stroke="#7a7a7a" stroke-width="0.8" fill="none"/><rect x="57.7" y="391.0" width="8.2" height="8.3" fill="#b4b4d8"/><path d="M93.3 391.3 H97.8 L99 392.5 V399.0 Q99 399.8 98.2 399.8 H93.3 Q92.5 399.8 92.5 399.0 V392.09999999999997 Q92.5 391.3 93.3 391.3 Z" fill="#3a0000" stroke="#d98400" stroke-width="0.85"/><path d="M94.3 394.59999999999997 L95.2 392.4 L96.1 394.59999999999997 M97.2 393.0 V394.59999999999997" stroke="#f09000" stroke-width="0.7" fill="none"/><rect x="95" y="396.8" width="1.6" height="1.6" fill="#bdbdbd"/><path d="M180.5 395.2 Q180.5 391.29999999999995 183.9 391.29999999999995 Q187.3 391.29999999999995 187.3 395.2 Z" fill="#c8c8c8"/><rect x="179.4" y="395.09999999999997" width="9" height="1" fill="#c8c8c8"/><path d="M182.4 395.9 V398.79999999999995 M185.4 395.9 V398.79999999999995" stroke="#c8c8c8" stroke-width="0.8"/><rect x="180.1" y="398.5" width="7.6" height="0.8" fill="#c8c8c8"/><path d="M183.9 392.7 V394.9" stroke="#232323" stroke-width="0.6"/><path d="M180.5 393.9 H187.3" stroke="#232323" stroke-width="0.5"/><circle cx="194.1" cy="395.2" r="1.7" fill="none" stroke="#c8c8c8" stroke-width="0.9"/><path d="M196.60 395.20 L197.70 395.20" stroke="#c8c8c8" stroke-width="0.8"/><path d="M195.87 396.97 L196.65 397.75" stroke="#c8c8c8" stroke-width="0.8"/><path d="M194.10 397.70 L194.10 398.80" stroke="#c8c8c8" stroke-width="0.8"/><path d="M192.33 396.97 L191.55 397.75" stroke="#c8c8c8" stroke-width="0.8"/><path d="M191.60 395.20 L190.50 395.20" stroke="#c8c8c8" stroke-width="0.8"/><path d="M192.33 393.43 L191.55 392.65" stroke="#c8c8c8" stroke-width="0.8"/><path d="M194.10 392.70 L194.10 391.60" stroke="#c8c8c8" stroke-width="0.8"/><path d="M195.87 393.43 L196.65 392.65" stroke="#c8c8c8" stroke-width="0.8"/><path d="M200.5 399.2 L208.3 391.2" stroke="#c8c8c8" stroke-width="0.9"/><path d="M274.4 395.5 Q274.4 393.9 275.6 394.4 Q276.6 395.7 275 396.9 Q272.5 397.2 272.3 394.7 Q272.5 391.7 275.8 392.0 Q278.8 392.9 278.5 396.0 Q277.8 399.4 274.3 399.2" stroke="#c0c0c0" stroke-width="0.8" fill="none"/><path d="M334.8 394.2 L336.6 396.0 L338.4 394.2" stroke="#aaa" stroke-width="0.8" fill="none"/><path d="M5 406.53 Q8.5 402.53 12 406.53 Q8.5 410.53 5 406.53 Z" fill="#d0d0d0"/><circle cx="8.5" cy="406.53" r="1.3" fill="#232323"/><path d="M50.6 404.72999999999996 L52.4 406.53 L50.6 408.33" stroke="#7a7a7a" stroke-width="0.8" fill="none"/><rect x="57.7" y="402.33" width="8.2" height="8.3" fill="#b4b4d8"/><path d="M93.3 402.63 H97.8 L99 403.83 V410.33 Q99 411.13 98.2 411.13 H93.3 Q92.5 411.13 92.5 410.33 V403.42999999999995 Q92.5 402.63 93.3 402.63 Z" fill="#3a0000" stroke="#d98400" stroke-width="0.85"/><path d="M94.3 405.92999999999995 L95.2 403.72999999999996 L96.1 405.92999999999995 M97.2 404.33 V405.92999999999995" stroke="#f09000" stroke-width="0.7" fill="none"/><rect x="95" y="408.13" width="1.6" height="1.6" fill="#bdbdbd"/><path d="M180.5 406.53 Q180.5 402.62999999999994 183.9 402.62999999999994 Q187.3 402.62999999999994 187.3 406.53 Z" fill="#c8c8c8"/><rect x="179.4" y="406.42999999999995" width="9" height="1" fill="#c8c8c8"/><path d="M182.4 407.22999999999996 V410.12999999999994 M185.4 407.22999999999996 V410.12999999999994" stroke="#c8c8c8" stroke-width="0.8"/><rect x="180.1" y="409.83" width="7.6" height="0.8" fill="#c8c8c8"/><path d="M183.9 404.03 V406.22999999999996" stroke="#232323" stroke-width="0.6"/><path d="M180.5 405.22999999999996 H187.3" stroke="#232323" stroke-width="0.5"/><circle cx="194.1" cy="406.53" r="1.7" fill="none" stroke="#c8c8c8" stroke-width="0.9"/><path d="M196.60 406.53 L197.70 406.53" stroke="#c8c8c8" stroke-width="0.8"/><path d="M195.87 408.30 L196.65 409.08" stroke="#c8c8c8" stroke-width="0.8"/><path d="M194.10 409.03 L194.10 410.13" stroke="#c8c8c8" stroke-width="0.8"/><path d="M192.33 408.30 L191.55 409.08" stroke="#c8c8c8" stroke-width="0.8"/><path d="M191.60 406.53 L190.50 406.53" stroke="#c8c8c8" stroke-width="0.8"/><path d="M192.33 404.76 L191.55 403.98" stroke="#c8c8c8" stroke-width="0.8"/><path d="M194.10 404.03 L194.10 402.93" stroke="#c8c8c8" stroke-width="0.8"/><path d="M195.87 404.76 L196.65 403.98" stroke="#c8c8c8" stroke-width="0.8"/><path d="M200.5 410.53 L208.3 402.53" stroke="#c8c8c8" stroke-width="0.9"/><path d="M274.4 406.83 Q274.4 405.22999999999996 275.6 405.72999999999996 Q276.6 407.03 275 408.22999999999996 Q272.5 408.53 272.3 406.03 Q272.5 403.03 275.8 403.33 Q278.8 404.22999999999996 278.5 407.33 Q277.8 410.72999999999996 274.3 410.53" stroke="#c0c0c0" stroke-width="0.8" fill="none"/><path d="M334.8 405.53 L336.6 407.33 L338.4 405.53" stroke="#aaa" stroke-width="0.8" fill="none"/><path d="M5 417.86 Q8.5 413.86 12 417.86 Q8.5 421.86 5 417.86 Z" fill="#d0d0d0"/><circle cx="8.5" cy="417.86" r="1.3" fill="#232323"/><path d="M50.6 416.06 L52.4 417.86 L50.6 419.66" stroke="#7a7a7a" stroke-width="0.8" fill="none"/><rect x="57.7" y="413.66" width="8.2" height="8.3" fill="#b4b4d8"/><path d="M93.3 413.96000000000004 H97.8 L99 415.16 V421.66 Q99 422.46000000000004 98.2 422.46000000000004 H93.3 Q92.5 422.46000000000004 92.5 421.66 V414.76 Q92.5 413.96000000000004 93.3 413.96000000000004 Z" fill="#3a0000" stroke="#d98400" stroke-width="0.85"/><path d="M94.3 417.26 L95.2 415.06 L96.1 417.26 M97.2 415.66 V417.26" stroke="#f09000" stroke-width="0.7" fill="none"/><rect x="95" y="419.46000000000004" width="1.6" height="1.6" fill="#bdbdbd"/><path d="M180.5 417.86 Q180.5 413.96 183.9 413.96 Q187.3 413.96 187.3 417.86 Z" fill="#c8c8c8"/><rect x="179.4" y="417.76" width="9" height="1" fill="#c8c8c8"/><path d="M182.4 418.56 V421.46 M185.4 418.56 V421.46" stroke="#c8c8c8" stroke-width="0.8"/><rect x="180.1" y="421.16" width="7.6" height="0.8" fill="#c8c8c8"/><path d="M183.9 415.36 V417.56" stroke="#232323" stroke-width="0.6"/><path d="M180.5 416.56 H187.3" stroke="#232323" stroke-width="0.5"/><circle cx="194.1" cy="417.86" r="1.7" fill="none" stroke="#c8c8c8" stroke-width="0.9"/><path d="M196.60 417.86 L197.70 417.86" stroke="#c8c8c8" stroke-width="0.8"/><path d="M195.87 419.63 L196.65 420.41" stroke="#c8c8c8" stroke-width="0.8"/><path d="M194.10 420.36 L194.10 421.46" stroke="#c8c8c8" stroke-width="0.8"/><path d="M192.33 419.63 L191.55 420.41" stroke="#c8c8c8" stroke-width="0.8"/><path d="M191.60 417.86 L190.50 417.86" stroke="#c8c8c8" stroke-width="0.8"/><path d="M192.33 416.09 L191.55 415.31" stroke="#c8c8c8" stroke-width="0.8"/><path d="M194.10 415.36 L194.10 414.26" stroke="#c8c8c8" stroke-width="0.8"/><path d="M195.87 416.09 L196.65 415.31" stroke="#c8c8c8" stroke-width="0.8"/><path d="M200.5 421.86 L208.3 413.86" stroke="#c8c8c8" stroke-width="0.9"/><path d="M274.4 418.16 Q274.4 416.56 275.6 417.06 Q276.6 418.36 275 419.56 Q272.5 419.86 272.3 417.36 Q272.5 414.36 275.8 414.66 Q278.8 415.56 278.5 418.66 Q277.8 422.06 274.3 421.86" stroke="#c0c0c0" stroke-width="0.8" fill="none"/><path d="M334.8 416.86 L336.6 418.66 L338.4 416.86" stroke="#aaa" stroke-width="0.8" fill="none"/><path d="M5 429.19 Q8.5 425.19 12 429.19 Q8.5 433.19 5 429.19 Z" fill="#d0d0d0"/><circle cx="8.5" cy="429.19" r="1.3" fill="#232323"/><path d="M50.6 427.39 L52.4 429.19 L50.6 430.99" stroke="#7a7a7a" stroke-width="0.8" fill="none"/><rect x="57.7" y="424.99" width="8.2" height="8.3" fill="#b4b4d8"/><path d="M93.3 425.29 H97.8 L99 426.49 V432.99 Q99 433.79 98.2 433.79 H93.3 Q92.5 433.79 92.5 432.99 V426.09 Q92.5 425.29 93.3 425.29 Z" fill="#3a0000" stroke="#d98400" stroke-width="0.85"/><path d="M94.3 428.59 L95.2 426.39 L96.1 428.59 M97.2 426.99 V428.59" stroke="#f09000" stroke-width="0.7" fill="none"/><rect x="95" y="430.79" width="1.6" height="1.6" fill="#bdbdbd"/><path d="M180.5 429.19 Q180.5 425.28999999999996 183.9 425.28999999999996 Q187.3 425.28999999999996 187.3 429.19 Z" fill="#c8c8c8"/><rect x="179.4" y="429.09" width="9" height="1" fill="#c8c8c8"/><path d="M182.4 429.89 V432.78999999999996 M185.4 429.89 V432.78999999999996" stroke="#c8c8c8" stroke-width="0.8"/><rect x="180.1" y="432.49" width="7.6" height="0.8" fill="#c8c8c8"/><path d="M183.9 426.69 V428.89" stroke="#232323" stroke-width="0.6"/><path d="M180.5 427.89 H187.3" stroke="#232323" stroke-width="0.5"/><circle cx="194.1" cy="429.19" r="1.7" fill="none" stroke="#c8c8c8" stroke-width="0.9"/><path d="M196.60 429.19 L197.70 429.19" stroke="#c8c8c8" stroke-width="0.8"/><path d="M195.87 430.96 L196.65 431.74" stroke="#c8c8c8" stroke-width="0.8"/><path d="M194.10 431.69 L194.10 432.79" stroke="#c8c8c8" stroke-width="0.8"/><path d="M192.33 430.96 L191.55 431.74" stroke="#c8c8c8" stroke-width="0.8"/><path d="M191.60 429.19 L190.50 429.19" stroke="#c8c8c8" stroke-width="0.8"/><path d="M192.33 427.42 L191.55 426.64" stroke="#c8c8c8" stroke-width="0.8"/><path d="M194.10 426.69 L194.10 425.59" stroke="#c8c8c8" stroke-width="0.8"/><path d="M195.87 427.42 L196.65 426.64" stroke="#c8c8c8" stroke-width="0.8"/><path d="M200.5 433.19 L208.3 425.19" stroke="#c8c8c8" stroke-width="0.9"/><path d="M274.4 429.49 Q274.4 427.89 275.6 428.39 Q276.6 429.69 275 430.89 Q272.5 431.19 272.3 428.69 Q272.5 425.69 275.8 425.99 Q278.8 426.89 278.5 429.99 Q277.8 433.39 274.3 433.19" stroke="#c0c0c0" stroke-width="0.8" fill="none"/><path d="M334.8 428.19 L336.6 429.99 L338.4 428.19" stroke="#aaa" stroke-width="0.8" fill="none"/><path d="M5 440.52 Q8.5 436.52 12 440.52 Q8.5 444.52 5 440.52 Z" fill="#d0d0d0"/><circle cx="8.5" cy="440.52" r="1.3" fill="#232323"/><path d="M50.6 438.71999999999997 L52.4 440.52 L50.6 442.32" stroke="#7a7a7a" stroke-width="0.8" fill="none"/><rect x="57.7" y="436.32" width="8.2" height="8.3" fill="#b4b4d8"/><path d="M93.3 436.62 H97.8 L99 437.82 V444.32 Q99 445.12 98.2 445.12 H93.3 Q92.5 445.12 92.5 444.32 V437.41999999999996 Q92.5 436.62 93.3 436.62 Z" fill="#3a0000" stroke="#d98400" stroke-width="0.85"/><path d="M94.3 439.91999999999996 L95.2 437.71999999999997 L96.1 439.91999999999996 M97.2 438.32 V439.91999999999996" stroke="#f09000" stroke-width="0.7" fill="none"/><rect x="95" y="442.12" width="1.6" height="1.6" fill="#bdbdbd"/><path d="M180.5 440.52 Q180.5 436.61999999999995 183.9 436.61999999999995 Q187.3 436.61999999999995 187.3 440.52 Z" fill="#c8c8c8"/><rect x="179.4" y="440.41999999999996" width="9" height="1" fill="#c8c8c8"/><path d="M182.4 441.21999999999997 V444.11999999999995 M185.4 441.21999999999997 V444.11999999999995" stroke="#c8c8c8" stroke-width="0.8"/><rect x="180.1" y="443.82" width="7.6" height="0.8" fill="#c8c8c8"/><path d="M183.9 438.02 V440.21999999999997" stroke="#232323" stroke-width="0.6"/><path d="M180.5 439.21999999999997 H187.3" stroke="#232323" stroke-width="0.5"/><circle cx="194.1" cy="440.52" r="1.7" fill="none" stroke="#c8c8c8" stroke-width="0.9"/><path d="M196.60 440.52 L197.70 440.52" stroke="#c8c8c8" stroke-width="0.8"/><path d="M195.87 442.29 L196.65 443.07" stroke="#c8c8c8" stroke-width="0.8"/><path d="M194.10 443.02 L194.10 444.12" stroke="#c8c8c8" stroke-width="0.8"/><path d="M192.33 442.29 L191.55 443.07" stroke="#c8c8c8" stroke-width="0.8"/><path d="M191.60 440.52 L190.50 440.52" stroke="#c8c8c8" stroke-width="0.8"/><path d="M192.33 438.75 L191.55 437.97" stroke="#c8c8c8" stroke-width="0.8"/><path d="M194.10 438.02 L194.10 436.92" stroke="#c8c8c8" stroke-width="0.8"/><path d="M195.87 438.75 L196.65 437.97" stroke="#c8c8c8" stroke-width="0.8"/><path d="M200.5 444.52 L208.3 436.52" stroke="#c8c8c8" stroke-width="0.9"/><path d="M274.4 440.82 Q274.4 439.21999999999997 275.6 439.71999999999997 Q276.6 441.02 275 442.21999999999997 Q272.5 442.52 272.3 440.02 Q272.5 437.02 275.8 437.32 Q278.8 438.21999999999997 278.5 441.32 Q277.8 444.71999999999997 274.3 444.52" stroke="#c0c0c0" stroke-width="0.8" fill="none"/><path d="M334.8 439.52 L336.6 441.32 L338.4 439.52" stroke="#aaa" stroke-width="0.8" fill="none"/><path d="M5 451.85 Q8.5 447.85 12 451.85 Q8.5 455.85 5 451.85 Z" fill="#d0d0d0"/><circle cx="8.5" cy="451.85" r="1.3" fill="#232323"/><path d="M50.6 450.05 L52.4 451.85 L50.6 453.65000000000003" stroke="#7a7a7a" stroke-width="0.8" fill="none"/><rect x="57.7" y="447.65000000000003" width="8.2" height="8.3" fill="#b4b4d8"/><path d="M93.3 447.95000000000005 H97.8 L99 449.15000000000003 V455.65000000000003 Q99 456.45000000000005 98.2 456.45000000000005 H93.3 Q92.5 456.45000000000005 92.5 455.65000000000003 V448.75 Q92.5 447.95000000000005 93.3 447.95000000000005 Z" fill="#3a0000" stroke="#d98400" stroke-width="0.85"/><path d="M94.3 451.25 L95.2 449.05 L96.1 451.25 M97.2 449.65000000000003 V451.25" stroke="#f09000" stroke-width="0.7" fill="none"/><rect x="95" y="453.45000000000005" width="1.6" height="1.6" fill="#bdbdbd"/><path d="M180.5 451.85 Q180.5 447.95 183.9 447.95 Q187.3 447.95 187.3 451.85 Z" fill="#c8c8c8"/><rect x="179.4" y="451.75" width="9" height="1" fill="#c8c8c8"/><path d="M182.4 452.55 V455.45 M185.4 452.55 V455.45" stroke="#c8c8c8" stroke-width="0.8"/><rect x="180.1" y="455.15000000000003" width="7.6" height="0.8" fill="#c8c8c8"/><path d="M183.9 449.35 V451.55" stroke="#232323" stroke-width="0.6"/><path d="M180.5 450.55 H187.3" stroke="#232323" stroke-width="0.5"/><circle cx="194.1" cy="451.85" r="1.7" fill="none" stroke="#c8c8c8" stroke-width="0.9"/><path d="M196.60 451.85 L197.70 451.85" stroke="#c8c8c8" stroke-width="0.8"/><path d="M195.87 453.62 L196.65 454.40" stroke="#c8c8c8" stroke-width="0.8"/><path d="M194.10 454.35 L194.10 455.45" stroke="#c8c8c8" stroke-width="0.8"/><path d="M192.33 453.62 L191.55 454.40" stroke="#c8c8c8" stroke-width="0.8"/><path d="M191.60 451.85 L190.50 451.85" stroke="#c8c8c8" stroke-width="0.8"/><path d="M192.33 450.08 L191.55 449.30" stroke="#c8c8c8" stroke-width="0.8"/><path d="M194.10 449.35 L194.10 448.25" stroke="#c8c8c8" stroke-width="0.8"/><path d="M195.87 450.08 L196.65 449.30" stroke="#c8c8c8" stroke-width="0.8"/><path d="M200.5 455.85 L208.3 447.85" stroke="#c8c8c8" stroke-width="0.9"/><path d="M274.4 452.15000000000003 Q274.4 450.55 275.6 451.05 Q276.6 452.35 275 453.55 Q272.5 453.85 272.3 451.35 Q272.5 448.35 275.8 448.65000000000003 Q278.8 449.55 278.5 452.65000000000003 Q277.8 456.05 274.3 455.85" stroke="#c0c0c0" stroke-width="0.8" fill="none"/><path d="M334.8 450.85 L336.6 452.65000000000003 L338.4 450.85" stroke="#aaa" stroke-width="0.8" fill="none"/><path d="M5 463.18 Q8.5 459.18 12 463.18 Q8.5 467.18 5 463.18 Z" fill="#d0d0d0"/><circle cx="8.5" cy="463.18" r="1.3" fill="#232323"/><path d="M50.6 461.38 L52.4 463.18 L50.6 464.98" stroke="#7a7a7a" stroke-width="0.8" fill="none"/><rect x="57.7" y="458.98" width="8.2" height="8.3" fill="#b4b4d8"/><path d="M93.3 459.28000000000003 H97.8 L99 460.48 V466.98 Q99 467.78000000000003 98.2 467.78000000000003 H93.3 Q92.5 467.78000000000003 92.5 466.98 V460.08 Q92.5 459.28000000000003 93.3 459.28000000000003 Z" fill="#3a0000" stroke="#d98400" stroke-width="0.85"/><path d="M94.3 462.58 L95.2 460.38 L96.1 462.58 M97.2 460.98 V462.58" stroke="#f09000" stroke-width="0.7" fill="none"/><rect x="95" y="464.78000000000003" width="1.6" height="1.6" fill="#bdbdbd"/><path d="M180.5 463.18 Q180.5 459.28 183.9 459.28 Q187.3 459.28 187.3 463.18 Z" fill="#c8c8c8"/><rect x="179.4" y="463.08" width="9" height="1" fill="#c8c8c8"/><path d="M182.4 463.88 V466.78 M185.4 463.88 V466.78" stroke="#c8c8c8" stroke-width="0.8"/><rect x="180.1" y="466.48" width="7.6" height="0.8" fill="#c8c8c8"/><path d="M183.9 460.68 V462.88" stroke="#232323" stroke-width="0.6"/><path d="M180.5 461.88 H187.3" stroke="#232323" stroke-width="0.5"/><circle cx="194.1" cy="463.18" r="1.7" fill="none" stroke="#c8c8c8" stroke-width="0.9"/><path d="M196.60 463.18 L197.70 463.18" stroke="#c8c8c8" stroke-width="0.8"/><path d="M195.87 464.95 L196.65 465.73" stroke="#c8c8c8" stroke-width="0.8"/><path d="M194.10 465.68 L194.10 466.78" stroke="#c8c8c8" stroke-width="0.8"/><path d="M192.33 464.95 L191.55 465.73" stroke="#c8c8c8" stroke-width="0.8"/><path d="M191.60 463.18 L190.50 463.18" stroke="#c8c8c8" stroke-width="0.8"/><path d="M192.33 461.41 L191.55 460.63" stroke="#c8c8c8" stroke-width="0.8"/><path d="M194.10 460.68 L194.10 459.58" stroke="#c8c8c8" stroke-width="0.8"/><path d="M195.87 461.41 L196.65 460.63" stroke="#c8c8c8" stroke-width="0.8"/><path d="M200.5 467.18 L208.3 459.18" stroke="#c8c8c8" stroke-width="0.9"/><path d="M274.4 463.48 Q274.4 461.88 275.6 462.38 Q276.6 463.68 275 464.88 Q272.5 465.18 272.3 462.68 Q272.5 459.68 275.8 459.98 Q278.8 460.88 278.5 463.98 Q277.8 467.38 274.3 467.18" stroke="#c0c0c0" stroke-width="0.8" fill="none"/><path d="M334.8 462.18 L336.6 463.98 L338.4 462.18" stroke="#aaa" stroke-width="0.8" fill="none"/><path d="M5 474.51 Q8.5 470.51 12 474.51 Q8.5 478.51 5 474.51 Z" fill="#d0d0d0"/><circle cx="8.5" cy="474.51" r="1.3" fill="#232323"/><path d="M50.6 472.71 L52.4 474.51 L50.6 476.31" stroke="#7a7a7a" stroke-width="0.8" fill="none"/><rect x="57.7" y="470.31" width="8.2" height="8.3" fill="#b4b4d8"/><path d="M93.3 470.61 H97.8 L99 471.81 V478.31 Q99 479.11 98.2 479.11 H93.3 Q92.5 479.11 92.5 478.31 V471.40999999999997 Q92.5 470.61 93.3 470.61 Z" fill="#3a0000" stroke="#d98400" stroke-width="0.85"/><path d="M94.3 473.90999999999997 L95.2 471.71 L96.1 473.90999999999997 M97.2 472.31 V473.90999999999997" stroke="#f09000" stroke-width="0.7" fill="none"/><rect x="95" y="476.11" width="1.6" height="1.6" fill="#bdbdbd"/><path d="M180.5 474.51 Q180.5 470.60999999999996 183.9 470.60999999999996 Q187.3 470.60999999999996 187.3 474.51 Z" fill="#c8c8c8"/><rect x="179.4" y="474.40999999999997" width="9" height="1" fill="#c8c8c8"/><path d="M182.4 475.21 V478.10999999999996 M185.4 475.21 V478.10999999999996" stroke="#c8c8c8" stroke-width="0.8"/><rect x="180.1" y="477.81" width="7.6" height="0.8" fill="#c8c8c8"/><path d="M183.9 472.01 V474.21" stroke="#232323" stroke-width="0.6"/><path d="M180.5 473.21 H187.3" stroke="#232323" stroke-width="0.5"/><circle cx="194.1" cy="474.51" r="1.7" fill="none" stroke="#c8c8c8" stroke-width="0.9"/><path d="M196.60 474.51 L197.70 474.51" stroke="#c8c8c8" stroke-width="0.8"/><path d="M195.87 476.28 L196.65 477.06" stroke="#c8c8c8" stroke-width="0.8"/><path d="M194.10 477.01 L194.10 478.11" stroke="#c8c8c8" stroke-width="0.8"/><path d="M192.33 476.28 L191.55 477.06" stroke="#c8c8c8" stroke-width="0.8"/><path d="M191.60 474.51 L190.50 474.51" stroke="#c8c8c8" stroke-width="0.8"/><path d="M192.33 472.74 L191.55 471.96" stroke="#c8c8c8" stroke-width="0.8"/><path d="M194.10 472.01 L194.10 470.91" stroke="#c8c8c8" stroke-width="0.8"/><path d="M195.87 472.74 L196.65 471.96" stroke="#c8c8c8" stroke-width="0.8"/><path d="M200.5 478.51 L208.3 470.51" stroke="#c8c8c8" stroke-width="0.9"/><path d="M274.4 474.81 Q274.4 473.21 275.6 473.71 Q276.6 475.01 275 476.21 Q272.5 476.51 272.3 474.01 Q272.5 471.01 275.8 471.31 Q278.8 472.21 278.5 475.31 Q277.8 478.71 274.3 478.51" stroke="#c0c0c0" stroke-width="0.8" fill="none"/><path d="M334.8 473.51 L336.6 475.31 L338.4 473.51" stroke="#aaa" stroke-width="0.8" fill="none"/><path d="M5 485.84 Q8.5 481.84 12 485.84 Q8.5 489.84 5 485.84 Z" fill="#d0d0d0"/><circle cx="8.5" cy="485.84" r="1.3" fill="#232323"/><path d="M50.6 484.03999999999996 L52.4 485.84 L50.6 487.64" stroke="#7a7a7a" stroke-width="0.8" fill="none"/><rect x="57.7" y="481.64" width="8.2" height="8.3" fill="#b4b4d8"/><path d="M93.3 481.94 H97.8 L99 483.14 V489.64 Q99 490.44 98.2 490.44 H93.3 Q92.5 490.44 92.5 489.64 V482.73999999999995 Q92.5 481.94 93.3 481.94 Z" fill="#3a0000" stroke="#d98400" stroke-width="0.85"/><path d="M94.3 485.23999999999995 L95.2 483.03999999999996 L96.1 485.23999999999995 M97.2 483.64 V485.23999999999995" stroke="#f09000" stroke-width="0.7" fill="none"/><rect x="95" y="487.44" width="1.6" height="1.6" fill="#bdbdbd"/><path d="M180.5 485.84 Q180.5 481.93999999999994 183.9 481.93999999999994 Q187.3 481.93999999999994 187.3 485.84 Z" fill="#c8c8c8"/><rect x="179.4" y="485.73999999999995" width="9" height="1" fill="#c8c8c8"/><path d="M182.4 486.53999999999996 V489.43999999999994 M185.4 486.53999999999996 V489.43999999999994" stroke="#c8c8c8" stroke-width="0.8"/><rect x="180.1" y="489.14" width="7.6" height="0.8" fill="#c8c8c8"/><path d="M183.9 483.34 V485.53999999999996" stroke="#232323" stroke-width="0.6"/><path d="M180.5 484.53999999999996 H187.3" stroke="#232323" stroke-width="0.5"/><circle cx="194.1" cy="485.84" r="1.7" fill="none" stroke="#c8c8c8" stroke-width="0.9"/><path d="M196.60 485.84 L197.70 485.84" stroke="#c8c8c8" stroke-width="0.8"/><path d="M195.87 487.61 L196.65 488.39" stroke="#c8c8c8" stroke-width="0.8"/><path d="M194.10 488.34 L194.10 489.44" stroke="#c8c8c8" stroke-width="0.8"/><path d="M192.33 487.61 L191.55 488.39" stroke="#c8c8c8" stroke-width="0.8"/><path d="M191.60 485.84 L190.50 485.84" stroke="#c8c8c8" stroke-width="0.8"/><path d="M192.33 484.07 L191.55 483.29" stroke="#c8c8c8" stroke-width="0.8"/><path d="M194.10 483.34 L194.10 482.24" stroke="#c8c8c8" stroke-width="0.8"/><path d="M195.87 484.07 L196.65 483.29" stroke="#c8c8c8" stroke-width="0.8"/><path d="M200.5 489.84 L208.3 481.84" stroke="#c8c8c8" stroke-width="0.9"/><path d="M274.4 486.14 Q274.4 484.53999999999996 275.6 485.03999999999996 Q276.6 486.34 275 487.53999999999996 Q272.5 487.84 272.3 485.34 Q272.5 482.34 275.8 482.64 Q278.8 483.53999999999996 278.5 486.64 Q277.8 490.03999999999996 274.3 489.84" stroke="#c0c0c0" stroke-width="0.8" fill="none"/><path d="M334.8 484.84 L336.6 486.64 L338.4 484.84" stroke="#aaa" stroke-width="0.8" fill="none"/><path d="M5 497.17 Q8.5 493.17 12 497.17 Q8.5 501.17 5 497.17 Z" fill="#d0d0d0"/><circle cx="8.5" cy="497.17" r="1.3" fill="#232323"/><path d="M50.6 495.37 L52.4 497.17 L50.6 498.97" stroke="#7a7a7a" stroke-width="0.8" fill="none"/><rect x="57.7" y="492.97" width="8.2" height="8.3" fill="#b4b4d8"/><path d="M93.3 493.27000000000004 H97.8 L99 494.47 V500.97 Q99 501.77000000000004 98.2 501.77000000000004 H93.3 Q92.5 501.77000000000004 92.5 500.97 V494.07 Q92.5 493.27000000000004 93.3 493.27000000000004 Z" fill="#3a0000" stroke="#d98400" stroke-width="0.85"/><path d="M94.3 496.57 L95.2 494.37 L96.1 496.57 M97.2 494.97 V496.57" stroke="#f09000" stroke-width="0.7" fill="none"/><rect x="95" y="498.77000000000004" width="1.6" height="1.6" fill="#bdbdbd"/><path d="M180.5 497.17 Q180.5 493.27 183.9 493.27 Q187.3 493.27 187.3 497.17 Z" fill="#c8c8c8"/><rect x="179.4" y="497.07" width="9" height="1" fill="#c8c8c8"/><path d="M182.4 497.87 V500.77 M185.4 497.87 V500.77" stroke="#c8c8c8" stroke-width="0.8"/><rect x="180.1" y="500.47" width="7.6" height="0.8" fill="#c8c8c8"/><path d="M183.9 494.67 V496.87" stroke="#232323" stroke-width="0.6"/><path d="M180.5 495.87 H187.3" stroke="#232323" stroke-width="0.5"/><circle cx="194.1" cy="497.17" r="1.7" fill="none" stroke="#c8c8c8" stroke-width="0.9"/><path d="M196.60 497.17 L197.70 497.17" stroke="#c8c8c8" stroke-width="0.8"/><path d="M195.87 498.94 L196.65 499.72" stroke="#c8c8c8" stroke-width="0.8"/><path d="M194.10 499.67 L194.10 500.77" stroke="#c8c8c8" stroke-width="0.8"/><path d="M192.33 498.94 L191.55 499.72" stroke="#c8c8c8" stroke-width="0.8"/><path d="M191.60 497.17 L190.50 497.17" stroke="#c8c8c8" stroke-width="0.8"/><path d="M192.33 495.40 L191.55 494.62" stroke="#c8c8c8" stroke-width="0.8"/><path d="M194.10 494.67 L194.10 493.57" stroke="#c8c8c8" stroke-width="0.8"/><path d="M195.87 495.40 L196.65 494.62" stroke="#c8c8c8" stroke-width="0.8"/><path d="M200.5 501.17 L208.3 493.17" stroke="#c8c8c8" stroke-width="0.9"/><path d="M274.4 497.47 Q274.4 495.87 275.6 496.37 Q276.6 497.67 275 498.87 Q272.5 499.17 272.3 496.67 Q272.5 493.67 275.8 493.97 Q278.8 494.87 278.5 497.97 Q277.8 501.37 274.3 501.17" stroke="#c0c0c0" stroke-width="0.8" fill="none"/><path d="M334.8 496.17 L336.6 497.97 L338.4 496.17" stroke="#aaa" stroke-width="0.8" fill="none"/><path d="M5 508.5 Q8.5 504.5 12 508.5 Q8.5 512.5 5 508.5 Z" fill="#d0d0d0"/><circle cx="8.5" cy="508.5" r="1.3" fill="#232323"/><path d="M50.6 506.7 L52.4 508.5 L50.6 510.3" stroke="#7a7a7a" stroke-width="0.8" fill="none"/><rect x="57.7" y="504.3" width="8.2" height="8.3" fill="#b4b4d8"/><path d="M93.3 504.6 H97.8 L99 505.8 V512.3 Q99 513.1 98.2 513.1 H93.3 Q92.5 513.1 92.5 512.3 V505.4 Q92.5 504.6 93.3 504.6 Z" fill="#3a0000" stroke="#d98400" stroke-width="0.85"/><path d="M94.3 507.9 L95.2 505.7 L96.1 507.9 M97.2 506.3 V507.9" stroke="#f09000" stroke-width="0.7" fill="none"/><rect x="95" y="510.1" width="1.6" height="1.6" fill="#bdbdbd"/><path d="M180.5 508.5 Q180.5 504.59999999999997 183.9 504.59999999999997 Q187.3 504.59999999999997 187.3 508.5 Z" fill="#c8c8c8"/><rect x="179.4" y="508.4" width="9" height="1" fill="#c8c8c8"/><path d="M182.4 509.2 V512.1 M185.4 509.2 V512.1" stroke="#c8c8c8" stroke-width="0.8"/><rect x="180.1" y="511.8" width="7.6" height="0.8" fill="#c8c8c8"/><path d="M183.9 506.0 V508.2" stroke="#232323" stroke-width="0.6"/><path d="M180.5 507.2 H187.3" stroke="#232323" stroke-width="0.5"/><circle cx="194.1" cy="508.5" r="1.7" fill="none" stroke="#c8c8c8" stroke-width="0.9"/><path d="M196.60 508.50 L197.70 508.50" stroke="#c8c8c8" stroke-width="0.8"/><path d="M195.87 510.27 L196.65 511.05" stroke="#c8c8c8" stroke-width="0.8"/><path d="M194.10 511.00 L194.10 512.10" stroke="#c8c8c8" stroke-width="0.8"/><path d="M192.33 510.27 L191.55 511.05" stroke="#c8c8c8" stroke-width="0.8"/><path d="M191.60 508.50 L190.50 508.50" stroke="#c8c8c8" stroke-width="0.8"/><path d="M192.33 506.73 L191.55 505.95" stroke="#c8c8c8" stroke-width="0.8"/><path d="M194.10 506.00 L194.10 504.90" stroke="#c8c8c8" stroke-width="0.8"/><path d="M195.87 506.73 L196.65 505.95" stroke="#c8c8c8" stroke-width="0.8"/><path d="M200.5 512.5 L208.3 504.5" stroke="#c8c8c8" stroke-width="0.9"/><path d="M274.4 508.8 Q274.4 507.2 275.6 507.7 Q276.6 509.0 275 510.2 Q272.5 510.5 272.3 508.0 Q272.5 505.0 275.8 505.3 Q278.8 506.2 278.5 509.3 Q277.8 512.7 274.3 512.5" stroke="#c0c0c0" stroke-width="0.8" fill="none"/><path d="M334.8 507.5 L336.6 509.3 L338.4 507.5" stroke="#aaa" stroke-width="0.8" fill="none"/><path d="M5 519.83 Q8.5 515.83 12 519.83 Q8.5 523.83 5 519.83 Z" fill="#d0d0d0"/><circle cx="8.5" cy="519.83" r="1.3" fill="#232323"/><path d="M50.6 518.0300000000001 L52.4 519.83 L50.6 521.63" stroke="#7a7a7a" stroke-width="0.8" fill="none"/><rect x="57.7" y="515.63" width="8.2" height="8.3" fill="#b4b4d8"/><path d="M93.3 515.9300000000001 H97.8 L99 517.13 V523.63 Q99 524.4300000000001 98.2 524.4300000000001 H93.3 Q92.5 524.4300000000001 92.5 523.63 V516.73 Q92.5 515.9300000000001 93.3 515.9300000000001 Z" fill="#3a0000" stroke="#d98400" stroke-width="0.85"/><path d="M94.3 519.23 L95.2 517.0300000000001 L96.1 519.23 M97.2 517.63 V519.23" stroke="#f09000" stroke-width="0.7" fill="none"/><rect x="95" y="521.4300000000001" width="1.6" height="1.6" fill="#bdbdbd"/><path d="M36.6 518.83 V517.5300000000001 Q36.6 515.5300000000001 38.6 515.5300000000001 Q40.6 515.5300000000001 40.6 517.5300000000001 V518.83" stroke="#c0c0c0" stroke-width="1" fill="none"/><rect x="35.3" y="518.63" width="6.7" height="5.4" rx="0.6" fill="#c0c0c0"/><rect x="38.1" y="520.13" width="1" height="2" fill="#232323"/><path d="M180.5 519.83 Q180.5 515.9300000000001 183.9 515.9300000000001 Q187.3 515.9300000000001 187.3 519.83 Z" fill="#c8c8c8"/><rect x="179.4" y="519.7300000000001" width="9" height="1" fill="#c8c8c8"/><path d="M182.4 520.5300000000001 V523.4300000000001 M185.4 520.5300000000001 V523.4300000000001" stroke="#c8c8c8" stroke-width="0.8"/><rect x="180.1" y="523.1300000000001" width="7.6" height="0.8" fill="#c8c8c8"/><path d="M183.9 517.33 V519.5300000000001" stroke="#232323" stroke-width="0.6"/><path d="M180.5 518.5300000000001 H187.3" stroke="#232323" stroke-width="0.5"/><circle cx="194.1" cy="519.83" r="1.7" fill="none" stroke="#c8c8c8" stroke-width="0.9"/><path d="M196.60 519.83 L197.70 519.83" stroke="#c8c8c8" stroke-width="0.8"/><path d="M195.87 521.60 L196.65 522.38" stroke="#c8c8c8" stroke-width="0.8"/><path d="M194.10 522.33 L194.10 523.43" stroke="#c8c8c8" stroke-width="0.8"/><path d="M192.33 521.60 L191.55 522.38" stroke="#c8c8c8" stroke-width="0.8"/><path d="M191.60 519.83 L190.50 519.83" stroke="#c8c8c8" stroke-width="0.8"/><path d="M192.33 518.06 L191.55 517.28" stroke="#c8c8c8" stroke-width="0.8"/><path d="M194.10 517.33 L194.10 516.23" stroke="#c8c8c8" stroke-width="0.8"/><path d="M195.87 518.06 L196.65 517.28" stroke="#c8c8c8" stroke-width="0.8"/><path d="M200.5 523.83 L208.3 515.83" stroke="#c8c8c8" stroke-width="0.9"/><path d="M274.4 520.13 Q274.4 518.5300000000001 275.6 519.0300000000001 Q276.6 520.33 275 521.5300000000001 Q272.5 521.83 272.3 519.33 Q272.5 516.33 275.8 516.63 Q278.8 517.5300000000001 278.5 520.63 Q277.8 524.0300000000001 274.3 523.83" stroke="#c0c0c0" stroke-width="0.8" fill="none"/><path d="M334.8 518.83 L336.6 520.63 L338.4 518.83" stroke="#aaa" stroke-width="0.8" fill="none"/><path d="M5 531.16 Q8.5 527.16 12 531.16 Q8.5 535.16 5 531.16 Z" fill="#d0d0d0"/><circle cx="8.5" cy="531.16" r="1.3" fill="#232323"/><path d="M50.6 529.36 L52.4 531.16 L50.6 532.9599999999999" stroke="#7a7a7a" stroke-width="0.8" fill="none"/><rect x="57.7" y="526.9599999999999" width="8.2" height="8.3" fill="#c83a3a"/><rect x="92" y="527.16" width="8" height="8" fill="#ffffff"/><path d="M180.5 531.16 Q180.5 527.26 183.9 527.26 Q187.3 527.26 187.3 531.16 Z" fill="#c8c8c8"/><rect x="179.4" y="531.0600000000001" width="9" height="1" fill="#c8c8c8"/><path d="M182.4 531.86 V534.76 M185.4 531.86 V534.76" stroke="#c8c8c8" stroke-width="0.8"/><rect x="180.1" y="534.46" width="7.6" height="0.8" fill="#c8c8c8"/><path d="M183.9 528.66 V530.86" stroke="#232323" stroke-width="0.6"/><path d="M180.5 529.86 H187.3" stroke="#232323" stroke-width="0.5"/><path d="M200.5 535.16 L208.3 527.16" stroke="#c8c8c8" stroke-width="0.9"/><path d="M274.4 531.4599999999999 Q274.4 529.86 275.6 530.36 Q276.6 531.66 275 532.86 Q272.5 533.16 272.3 530.66 Q272.5 527.66 275.8 527.9599999999999 Q278.8 528.86 278.5 531.9599999999999 Q277.8 535.36 274.3 535.16" stroke="#c0c0c0" stroke-width="0.8" fill="none"/><path d="M334.8 530.16 L336.6 531.9599999999999 L338.4 530.16" stroke="#aaa" stroke-width="0.8" fill="none"/></svg><div style="left:361px;top:0;width:30.7px;height:186px;background:rgba(255,255,255,0.045);"></div></div><div style="left:361px;top:313.5px;width:512px;height:37px;background:#232323;"></div><div style="left:357px;top:313.5px;width:505.5px;height:20px;overflow:hidden;"><span class="t" style="left:calc(-357px + 351.90px);top:12.64px;font-size:7.6px;color:#a0a0a0;transform:scaleX(0.86);">00000</span><span class="t" style="left:calc(-357px + 385.10px);top:12.64px;font-size:7.6px;color:#a0a0a0;transform:scaleX(0.86);">00050</span><span class="t" style="left:calc(-357px + 418.30px);top:12.64px;font-size:7.6px;color:#a0a0a0;transform:scaleX(0.86);">00100</span><span class="t" style="left:calc(-357px + 451.50px);top:12.64px;font-size:7.6px;color:#a0a0a0;transform:scaleX(0.86);">00150</span><span class="t" style="left:calc(-357px + 484.70px);top:12.64px;font-size:7.6px;color:#a0a0a0;transform:scaleX(0.86);">00200</span><span class="t" style="left:calc(-357px + 517.90px);top:12.64px;font-size:7.6px;color:#a0a0a0;transform:scaleX(0.86);">00250</span><span class="t" style="left:calc(-357px + 551.10px);top:12.64px;font-size:7.6px;color:#a0a0a0;transform:scaleX(0.86);">00300</span><span class="t" style="left:calc(-357px + 584.30px);top:12.64px;font-size:7.6px;color:#a0a0a0;transform:scaleX(0.86);">00350</span><span class="t" style="left:calc(-357px + 617.50px);top:12.64px;font-size:7.6px;color:#a0a0a0;transform:scaleX(0.86);">00400</span><span class="t" style="left:calc(-357px + 650.70px);top:12.64px;font-size:7.6px;color:#a0a0a0;transform:scaleX(0.86);">00450</span><span class="t" style="left:calc(-357px + 683.90px);top:12.64px;font-size:7.6px;color:#a0a0a0;transform:scaleX(0.86);">00500</span><span class="t" style="left:calc(-357px + 717.10px);top:12.64px;font-size:7.6px;color:#a0a0a0;transform:scaleX(0.86);">00550</span><span class="t" style="left:calc(-357px + 750.30px);top:12.64px;font-size:7.6px;color:#a0a0a0;transform:scaleX(0.86);">00600</span><span class="t" style="left:calc(-357px + 783.50px);top:12.64px;font-size:7.6px;color:#a0a0a0;transform:scaleX(0.86);">00650</span><span class="t" style="left:calc(-357px + 816.70px);top:12.64px;font-size:7.6px;color:#a0a0a0;transform:scaleX(0.86);">00700</span><span class="t" style="left:calc(-357px + 849.90px);top:12.64px;font-size:7.6px;color:#a0a0a0;transform:scaleX(0.86);">00750</span></div><svg style="position:absolute;left:0;top:0" width="1024" height="576"><rect x="358.5" y="319.2" width="500" height="4.7" fill="#6a6a6a"/><path d="M360.3 318.7 V324.4 H359 Q356.7 324.4 356.7 321.55 Q356.7 318.7 359 318.7 Z" fill="#3b8fe0"/><path d="M858.5 318.7 H860.5 Q862.5 318.7 862.5 321 V324.4 H858.5 Z" fill="#3b8fe0"/><rect x="369.3" y="319.2" width="0.9" height="4.7" fill="#5aa0e8"/><rect x="360.70" y="334.5" width="0.9" height="5.5" fill="#8a8a8a"/><rect x="393.90" y="334.5" width="0.9" height="5.5" fill="#8a8a8a"/><rect x="427.10" y="334.5" width="0.9" height="5.5" fill="#8a8a8a"/><rect x="460.30" y="334.5" width="0.9" height="5.5" fill="#8a8a8a"/><rect x="493.50" y="334.5" width="0.9" height="5.5" fill="#8a8a8a"/><rect x="526.70" y="334.5" width="0.9" height="5.5" fill="#8a8a8a"/><rect x="559.90" y="334.5" width="0.9" height="5.5" fill="#8a8a8a"/><rect x="593.10" y="334.5" width="0.9" height="5.5" fill="#8a8a8a"/><rect x="626.30" y="334.5" width="0.9" height="5.5" fill="#8a8a8a"/><rect x="659.50" y="334.5" width="0.9" height="5.5" fill="#8a8a8a"/><rect x="692.70" y="334.5" width="0.9" height="5.5" fill="#8a8a8a"/><rect x="725.90" y="334.5" width="0.9" height="5.5" fill="#8a8a8a"/><rect x="759.10" y="334.5" width="0.9" height="5.5" fill="#8a8a8a"/><rect x="792.30" y="334.5" width="0.9" height="5.5" fill="#8a8a8a"/><rect x="825.50" y="334.5" width="0.9" height="5.5" fill="#8a8a8a"/><rect x="858.70" y="334.5" width="0.9" height="5.5" fill="#8a8a8a"/><rect x="360" y="338.3" width="34" height="10" fill="#727272"/><path d="M361 338 V348.5 H359.5 Q357.7 348.5 357.7 346.5 V340 Q357.7 338 359.5 338 Z" fill="#3b8fe0"/><path d="M392.6 338 H394.3 Q396.3 338 396.3 340 V346.5 Q396.3 348.5 394.3 348.5 H392.6 Z" fill="#3b8fe0"/><rect x="360.8" y="348.9" width="501.5" height="2" fill="#16c416"/></svg><svg style="position:absolute;left:0;top:0" width="1024" height="576"><path d="M366 328 H373.9 V332.5 L369.75 336 L366 332.5 Z" fill="#3b8fe0"/><rect x="369.25" y="334" width="1" height="203" fill="#3b8fe0"/></svg><div style="left:862.5px;top:313.5px;width:10.5px;height:223.5px;background:#232323;"></div><div style="left:863.2px;top:435px;width:9.4px;height:102px;background:#3a3a3a;border-radius:4.7px;"></div><svg style="position:absolute;left:0;top:0" width="1024" height="576"><path d="M864.5 336.5 H871.5 V342 L868 344.5 L864.5 342 Z" fill="#cfcfcf"/><path d="M864 354 L867 351 L871.5 351 L871.5 357 L867 357 Z" fill="#cfcfcf"/><circle cx="867.2" cy="355.7" r="1.6" fill="#232323" stroke="#cfcfcf" stroke-width="0.7"/></svg><div style="left:0.8px;top:537.2px;width:872px;height:11.2px;background:#232323;"></div><svg style="position:absolute;left:0;top:0" width="1024" height="576"><rect x="5.5" y="539" width="5.5" height="5.5" fill="none" stroke="#3b8fe0" stroke-width="1"/><rect x="8.5" y="542" width="5.5" height="5.5" fill="#3b8fe0" stroke="#3b8fe0" stroke-width="0.5"/><circle cx="21.5" cy="542.2" r="2.8" fill="none" stroke="#b0b0b0" stroke-width="0.9"/><rect x="22" y="542.5" width="4.5" height="4" fill="none" stroke="#b0b0b0" stroke-width="0.9"/><path d="M33 539 H37.5 L36 541.3 H38.5 L35.2 547.5 L36 543.5 H32.5 Z" fill="none" stroke="#b0b0b0" stroke-width="0.8"/><path d="M44 547 V544 Q44 541.5 47 541.5 Q50 541.5 50 544 V547 Z" fill="#b0b0b0"/><circle cx="47" cy="540.5" r="1.5" fill="#b0b0b0"/><path d="M50 541 L52 539.5" stroke="#b0b0b0" stroke-width="0.8"/><path d="M360 545.5 L363 542.5 L366 545.5 Z" fill="#bdbdbd"/><circle cx="377.2" cy="543.6" r="2.8" fill="none" stroke="#bdbdbd" stroke-width="1"/><rect x="380.5" y="543.2" width="25" height="0.8" fill="#555"/><path d="M414.5 546 L418 541.5 L420 543.5 L421.5 541 L424.8 546 Z" fill="#bdbdbd"/></svg><span class="t" style="left:71.10px;top:538.80px;font-size:8.4px;color:#8a8a8a;transform:scaleX(0.8531);">Frame Render Time:</span><span class="t" style="left:141.70px;top:538.80px;font-size:8.4px;color:#4fc89a;transform:scaleX(0.8886);">8ms</span><div style="left:178.4px;top:538px;width:87.1px;height:10.4px;background:#1e1e1e;"></div><span class="t" style="left:181.30px;top:538.60px;font-size:8.4px;color:#8a8a8a;transform:scaleX(0.8837);">Toggle Switches / Modes</span><span class="t" style="left:885.70px;top:51.70px;font-size:8.4px;color:#b0b0b0;transform:scaleX(0.8803);">Preview</span><div style="left:877px;top:46.5px;width:147px;height:46.5px;overflow:hidden;"><span class="t" style="left:4.3px;top:43.6px;font-size:8.4px;color:#8a8a8a;transform:scaleX(0.9);">Shortcut</span></div><span class="t" style="left:885.70px;top:101.30px;font-size:8.4px;color:#9a9a9a;transform:scaleX(0.8803);">Properties</span><span class="t" style="left:885.70px;top:121.60px;font-size:8.4px;color:#9a9a9a;transform:scaleX(0.9530);">Align</span><span class="t" style="left:885.70px;top:141.60px;font-size:8.4px;color:#9a9a9a;transform:scaleX(0.8984);">Audio</span><div style="left:877.7px;top:114.4px;width:137.1px;height:1.7px;background:#181818;"></div><div style="left:877.7px;top:134.4px;width:137.1px;height:1.7px;background:#181818;"></div><div style="left:877.7px;top:154.8px;width:137.1px;height:1.7px;background:#181818;"></div><span class="t" style="left:885.70px;top:162.20px;font-size:8.4px;color:#b4b4b4;transform:scaleX(0.8480);">Effects &amp; Presets</span><div style="left:881.3px;top:177.8px;width:129.6px;height:11.4px;background:#171717;"></div><div style="left:879.5px;top:193.4px;width:135px;height:10.4px;background:#252525;"></div><span class="t" style="left:888.60px;top:193.90px;font-size:8.4px;color:#a9a9a9;transform:scaleX(0.8949);">* Animation Presets</span><div style="left:879.5px;top:204.73000000000002px;width:135px;height:10.4px;background:#252525;"></div><span class="t" style="left:888.60px;top:205.23px;font-size:8.4px;color:#a9a9a9;transform:scaleX(0.8589);">3D Channel</span><div style="left:879.5px;top:216.06px;width:135px;height:10.4px;background:#252525;"></div><span class="t" style="left:888.60px;top:216.56px;font-size:8.4px;color:#a9a9a9;transform:scaleX(0.9030);">Audio</span><div style="left:879.5px;top:227.39000000000001px;width:135px;height:10.4px;background:#252525;"></div><span class="t" style="left:888.60px;top:227.89px;font-size:8.4px;color:#a9a9a9;transform:scaleX(0.8672);">Blur &amp; Sharpen</span><div style="left:879.5px;top:238.72px;width:135px;height:10.4px;background:#252525;"></div><span class="t" style="left:888.60px;top:239.22px;font-size:8.4px;color:#a9a9a9;transform:scaleX(0.8419);">Boris FX Mocha</span><div style="left:879.5px;top:250.05px;width:135px;height:10.4px;background:#252525;"></div><span class="t" style="left:888.60px;top:250.55px;font-size:8.4px;color:#a9a9a9;transform:scaleX(0.8438);">Channel</span><div style="left:879.5px;top:261.38px;width:135px;height:10.4px;background:#252525;"></div><span class="t" style="left:888.60px;top:261.88px;font-size:8.4px;color:#a9a9a9;transform:scaleX(0.8592);">Cinema 4D</span><div style="left:879.5px;top:272.71px;width:135px;height:10.4px;background:#252525;"></div><span class="t" style="left:888.60px;top:273.21px;font-size:8.4px;color:#a9a9a9;transform:scaleX(0.8765);">Color Correction</span><div style="left:879.5px;top:284.04px;width:135px;height:10.4px;background:#252525;"></div><span class="t" style="left:888.60px;top:284.54px;font-size:8.4px;color:#a9a9a9;transform:scaleX(0.9271);">Distort</span><div style="left:879.5px;top:295.37px;width:135px;height:10.4px;background:#252525;"></div><span class="t" style="left:888.60px;top:295.87px;font-size:8.4px;color:#a9a9a9;transform:scaleX(0.8701);">Expression Controls</span><div style="left:879.5px;top:306.7px;width:135px;height:10.4px;background:#252525;"></div><span class="t" style="left:888.60px;top:307.20px;font-size:8.4px;color:#a9a9a9;transform:scaleX(0.8395);">Generate</span><div style="left:879.5px;top:318.03000000000003px;width:135px;height:10.4px;background:#252525;"></div><span class="t" style="left:888.60px;top:318.53px;font-size:8.4px;color:#a9a9a9;transform:scaleX(0.8830);">Immersive Video</span><div style="left:879.5px;top:329.36px;width:135px;height:10.4px;background:#252525;"></div><span class="t" style="left:888.60px;top:329.86px;font-size:8.4px;color:#a9a9a9;transform:scaleX(0.8605);">Keying</span><div style="left:879.5px;top:340.69px;width:135px;height:10.4px;background:#252525;"></div><span class="t" style="left:888.60px;top:341.19px;font-size:8.4px;color:#a9a9a9;transform:scaleX(0.9140);">Matte</span><div style="left:879.5px;top:352.02000000000004px;width:135px;height:10.4px;background:#252525;"></div><span class="t" style="left:888.60px;top:352.52px;font-size:8.4px;color:#a9a9a9;transform:scaleX(0.8741);">Noise &amp; Grain</span><div style="left:879.5px;top:363.34999999999997px;width:135px;height:10.4px;background:#252525;"></div><span class="t" style="left:888.60px;top:363.85px;font-size:8.4px;color:#a9a9a9;transform:scaleX(0.8745);">Obsolete</span><div style="left:879.5px;top:374.68px;width:135px;height:10.4px;background:#252525;"></div><span class="t" style="left:888.60px;top:375.18px;font-size:8.4px;color:#a9a9a9;transform:scaleX(0.8522);">Perspective</span><div style="left:879.5px;top:386.01000000000005px;width:135px;height:10.4px;background:#252525;"></div><span class="t" style="left:888.60px;top:386.51px;font-size:8.4px;color:#a9a9a9;transform:scaleX(0.9103);">Simulation</span><div style="left:879.5px;top:397.34px;width:135px;height:10.4px;background:#252525;"></div><span class="t" style="left:888.60px;top:397.84px;font-size:8.4px;color:#a9a9a9;transform:scaleX(0.8569);">Stylize</span><div style="left:879.5px;top:408.67px;width:135px;height:10.4px;background:#252525;"></div><span class="t" style="left:888.60px;top:409.17px;font-size:8.4px;color:#a9a9a9;transform:scaleX(0.9153);">Text</span><div style="left:879.5px;top:420.0px;width:135px;height:10.4px;background:#252525;"></div><span class="t" style="left:888.60px;top:420.50px;font-size:8.4px;color:#a9a9a9;transform:scaleX(0.8826);">Time</span><div style="left:879.5px;top:431.33px;width:135px;height:10.4px;background:#252525;"></div><span class="t" style="left:888.60px;top:431.83px;font-size:8.4px;color:#a9a9a9;transform:scaleX(0.9188);">Transition</span><div style="left:879.5px;top:442.66px;width:135px;height:10.4px;background:#252525;"></div><span class="t" style="left:888.60px;top:443.16px;font-size:8.4px;color:#a9a9a9;transform:scaleX(1.0033);">Utility</span><div style="left:877.7px;top:452.3px;width:137.1px;height:1.7px;background:#181818;"></div><div style="left:877.7px;top:464.8px;width:137.1px;height:1.7px;background:#181818;"></div><span class="t" style="left:885.70px;top:473.10px;font-size:8.4px;color:#9a9a9a;transform:scaleX(0.8308);">Brushes</span><div style="left:877.7px;top:486.4px;width:137.1px;height:1.7px;background:#181818;"></div><span class="t" style="left:885.70px;top:493.50px;font-size:8.4px;color:#9a9a9a;transform:scaleX(0.8879);">Paint</span><div style="left:877.7px;top:506.6px;width:137.1px;height:1.7px;background:#181818;"></div><span class="t" style="left:885.70px;top:513.60px;font-size:8.4px;color:#9a9a9a;transform:scaleX(0.8464);">Paragraph</span><div style="left:877.7px;top:526.8px;width:137.1px;height:1.7px;background:#181818;"></div><svg style="position:absolute;left:0;top:0" width="1024" height="576"><path d="M920.9 53.8 H926.7 M920.9 56.3 H926.7 M920.9 58.8 H926.7" stroke="#bdbdbd" stroke-width="0.9"/><rect x="908.4" y="71.8" width="1.4" height="6.6" fill="#c4c4c4"/><path d="M917.2 71.8 V78.4 L910.5 75.1 Z" fill="#c4c4c4"/><path d="M930 71.8 V78.4 L923.8 75.1 Z" fill="#c4c4c4"/><rect x="931.2" y="71.8" width="1.4" height="6.6" fill="#c4c4c4"/><path d="M940.6 71.8 V78.4 L947.8 75.1 Z" fill="#c4c4c4"/><rect x="956" y="71.8" width="1.4" height="6.6" fill="#c4c4c4"/><path d="M958.6 71.8 V78.4 L964.8 75.1 Z" fill="#c4c4c4"/><path d="M972 71.8 V78.4 L978.8 75.1 Z" fill="#c4c4c4"/><rect x="979.8" y="71.8" width="1.4" height="6.6" fill="#c4c4c4"/><rect x="881.3" y="84.7" width="130.3" height="0.8" fill="#2c2c2c"/><path d="M1002.5 163.5 H1008 M1002.5 166 H1008 M1002.5 168.5 H1008" stroke="#bdbdbd" stroke-width="0.9"/><circle cx="889.5" cy="182.6" r="2.5" fill="none" stroke="#c8c8c8" stroke-width="0.9"/><path d="M887.7 184.5 L885.8 187" stroke="#c8c8c8" stroke-width="1"/><path d="M893 185 L896.2 185 L894.6 186.6 Z" fill="#c8c8c8"/><path d="M882.3 196.79999999999998 L884.1 198.6 L882.3 200.4" stroke="#8a8a8a" stroke-width="0.8" fill="none"/><path d="M882.3 208.13 L884.1 209.93 L882.3 211.73000000000002" stroke="#8a8a8a" stroke-width="0.8" fill="none"/><path d="M882.3 219.45999999999998 L884.1 221.26 L882.3 223.06" stroke="#8a8a8a" stroke-width="0.8" fill="none"/><path d="M882.3 230.79 L884.1 232.59 L882.3 234.39000000000001" stroke="#8a8a8a" stroke-width="0.8" fill="none"/><path d="M882.3 242.11999999999998 L884.1 243.92 L882.3 245.72" stroke="#8a8a8a" stroke-width="0.8" fill="none"/><path d="M882.3 253.45 L884.1 255.25 L882.3 257.05" stroke="#8a8a8a" stroke-width="0.8" fill="none"/><path d="M882.3 264.78 L884.1 266.58 L882.3 268.38" stroke="#8a8a8a" stroke-width="0.8" fill="none"/><path d="M882.3 276.10999999999996 L884.1 277.90999999999997 L882.3 279.71" stroke="#8a8a8a" stroke-width="0.8" fill="none"/><path d="M882.3 287.44 L884.1 289.24 L882.3 291.04" stroke="#8a8a8a" stroke-width="0.8" fill="none"/><path d="M882.3 298.77 L884.1 300.57 L882.3 302.37" stroke="#8a8a8a" stroke-width="0.8" fill="none"/><path d="M882.3 310.09999999999997 L884.1 311.9 L882.3 313.7" stroke="#8a8a8a" stroke-width="0.8" fill="none"/><path d="M882.3 321.43 L884.1 323.23 L882.3 325.03000000000003" stroke="#8a8a8a" stroke-width="0.8" fill="none"/><path d="M882.3 332.76 L884.1 334.56 L882.3 336.36" stroke="#8a8a8a" stroke-width="0.8" fill="none"/><path d="M882.3 344.09 L884.1 345.89 L882.3 347.69" stroke="#8a8a8a" stroke-width="0.8" fill="none"/><path d="M882.3 355.42 L884.1 357.22 L882.3 359.02000000000004" stroke="#8a8a8a" stroke-width="0.8" fill="none"/><path d="M882.3 366.74999999999994 L884.1 368.54999999999995 L882.3 370.34999999999997" stroke="#8a8a8a" stroke-width="0.8" fill="none"/><path d="M882.3 378.08 L884.1 379.88 L882.3 381.68" stroke="#8a8a8a" stroke-width="0.8" fill="none"/><path d="M882.3 389.41 L884.1 391.21000000000004 L882.3 393.01000000000005" stroke="#8a8a8a" stroke-width="0.8" fill="none"/><path d="M882.3 400.73999999999995 L884.1 402.53999999999996 L882.3 404.34" stroke="#8a8a8a" stroke-width="0.8" fill="none"/><path d="M882.3 412.07 L884.1 413.87 L882.3 415.67" stroke="#8a8a8a" stroke-width="0.8" fill="none"/><path d="M882.3 423.4 L884.1 425.2 L882.3 427.0" stroke="#8a8a8a" stroke-width="0.8" fill="none"/><path d="M882.3 434.72999999999996 L884.1 436.53 L882.3 438.33" stroke="#8a8a8a" stroke-width="0.8" fill="none"/><path d="M882.3 446.06 L884.1 447.86 L882.3 449.66" stroke="#8a8a8a" stroke-width="0.8" fill="none"/><path d="M1003 456 H1011 V464 H1006 L1003 461 Z" fill="#c8c8c8"/><path d="M1003 461 H1006 V464" fill="#232323"/></svg><div style="left:264.8px;top:549.4px;width:32.1px;height:26.6px;background:rgba(255,255,255,0.2);"></div><svg style="position:absolute;left:0;top:0" width="1024" height="576"><path d="M10.3 558 L15.5 557.2 V562.3 H10.3 Z M16.3 557.1 L21.6 556.3 V562.3 H16.3 Z M10.3 563.1 H15.5 V568.3 L10.3 567.5 Z M16.3 563.1 H21.6 V569.1 L16.3 568.4 Z" fill="#f2f2f2"/><circle cx="49.2" cy="560.8" r="5.3" fill="none" stroke="#f2f2f2" stroke-width="1.3"/><path d="M45.4 564.7 L41 569.3" stroke="#f2f2f2" stroke-width="1.5"/><path d="M77 555.7 H84.5 L87.5 558.7 V569.2 H77 Z" fill="#f4f4f4"/><path d="M84.5 555.7 V558.7 H87.5" fill="#cfcfcf"/><circle cx="115.2" cy="562.4" r="7.1" fill="#2aa1de"/><path d="M110.8 562.2 L119.8 558.5 L118.2 566.5 L115.3 564.3 L113.8 565.8 L113.5 563.5 Z" fill="#fff"/><path d="M140.6 558 H146 L147.3 559.3 H155.5 V569 H140.6 Z" fill="#f0b93a"/><rect x="140.6" y="560.5" width="14.9" height="8.5" fill="#f7d05a"/><rect x="144.5" y="565" width="7" height="4" fill="#2b79c9"/><rect x="146" y="566.3" width="4" height="2.7" fill="#f7d05a"/><rect x="135.2" y="574.4" width="24.8" height="1.6" fill="#7db9e6"/><circle cx="181.3" cy="562.4" r="7.6" fill="#db4437"/><path d="M181.3 562.4 L174.7 558.6 A7.6 7.6 0 0 1 187.9 558.6 Z" fill="#db4437"/><path d="M181.3 562.4 L187.9 558.6 A7.6 7.6 0 0 1 181.3 570 Z" fill="#f4c20d"/><path d="M181.3 562.4 L181.3 570 A7.6 7.6 0 0 1 174.7 558.6 Z" fill="#0f9d58"/><circle cx="181.3" cy="562.4" r="3.3" fill="#fff"/><circle cx="181.3" cy="562.4" r="2.5" fill="#4285f4"/><ellipse cx="184.8" cy="565.5" rx="4.6" ry="3.8" fill="#bcd3ea"/><ellipse cx="184.5" cy="567.5" rx="4" ry="2" fill="#a9b8c8"/><rect x="168" y="574.4" width="27.3" height="1.6" fill="#7db9e6"/><path d="M209 555.7 H216.5 L219.5 558.7 V569.3 H209 Z" fill="#f4f4f4"/><rect x="201.3" y="574.4" width="26.8" height="1.6" fill="#7db9e6"/><rect x="239.8" y="555" width="14.9" height="14.1" rx="2" fill="#330000"/><rect x="234.4" y="574.4" width="26.9" height="1.6" fill="#7db9e6"/><rect x="273.4" y="555" width="14.4" height="14.1" rx="2" fill="#00005b"/><rect x="264.8" y="574.4" width="32.1" height="1.6" fill="#8cc6f0"/></svg><span class="t" style="left:241.60px;top:557.16px;font-size:9px;color:#ff9a00;font-weight:bold;transform:scaleX(1.2444);">Ai</span><span class="t" style="left:274.80px;top:557.16px;font-size:9px;color:#9999ff;font-weight:bold;transform:scaleX(1.0083);">Ae</span><span class="t" style="left:987.60px;top:551.92px;font-size:8px;color:#f0f0f0;transform:scaleX(0.9197);">5:19 PM</span><span class="t" style="left:983.30px;top:564.22px;font-size:8px;color:#f0f0f0;transform:scaleX(1.0202);">11/3/2023</span></body></html>
